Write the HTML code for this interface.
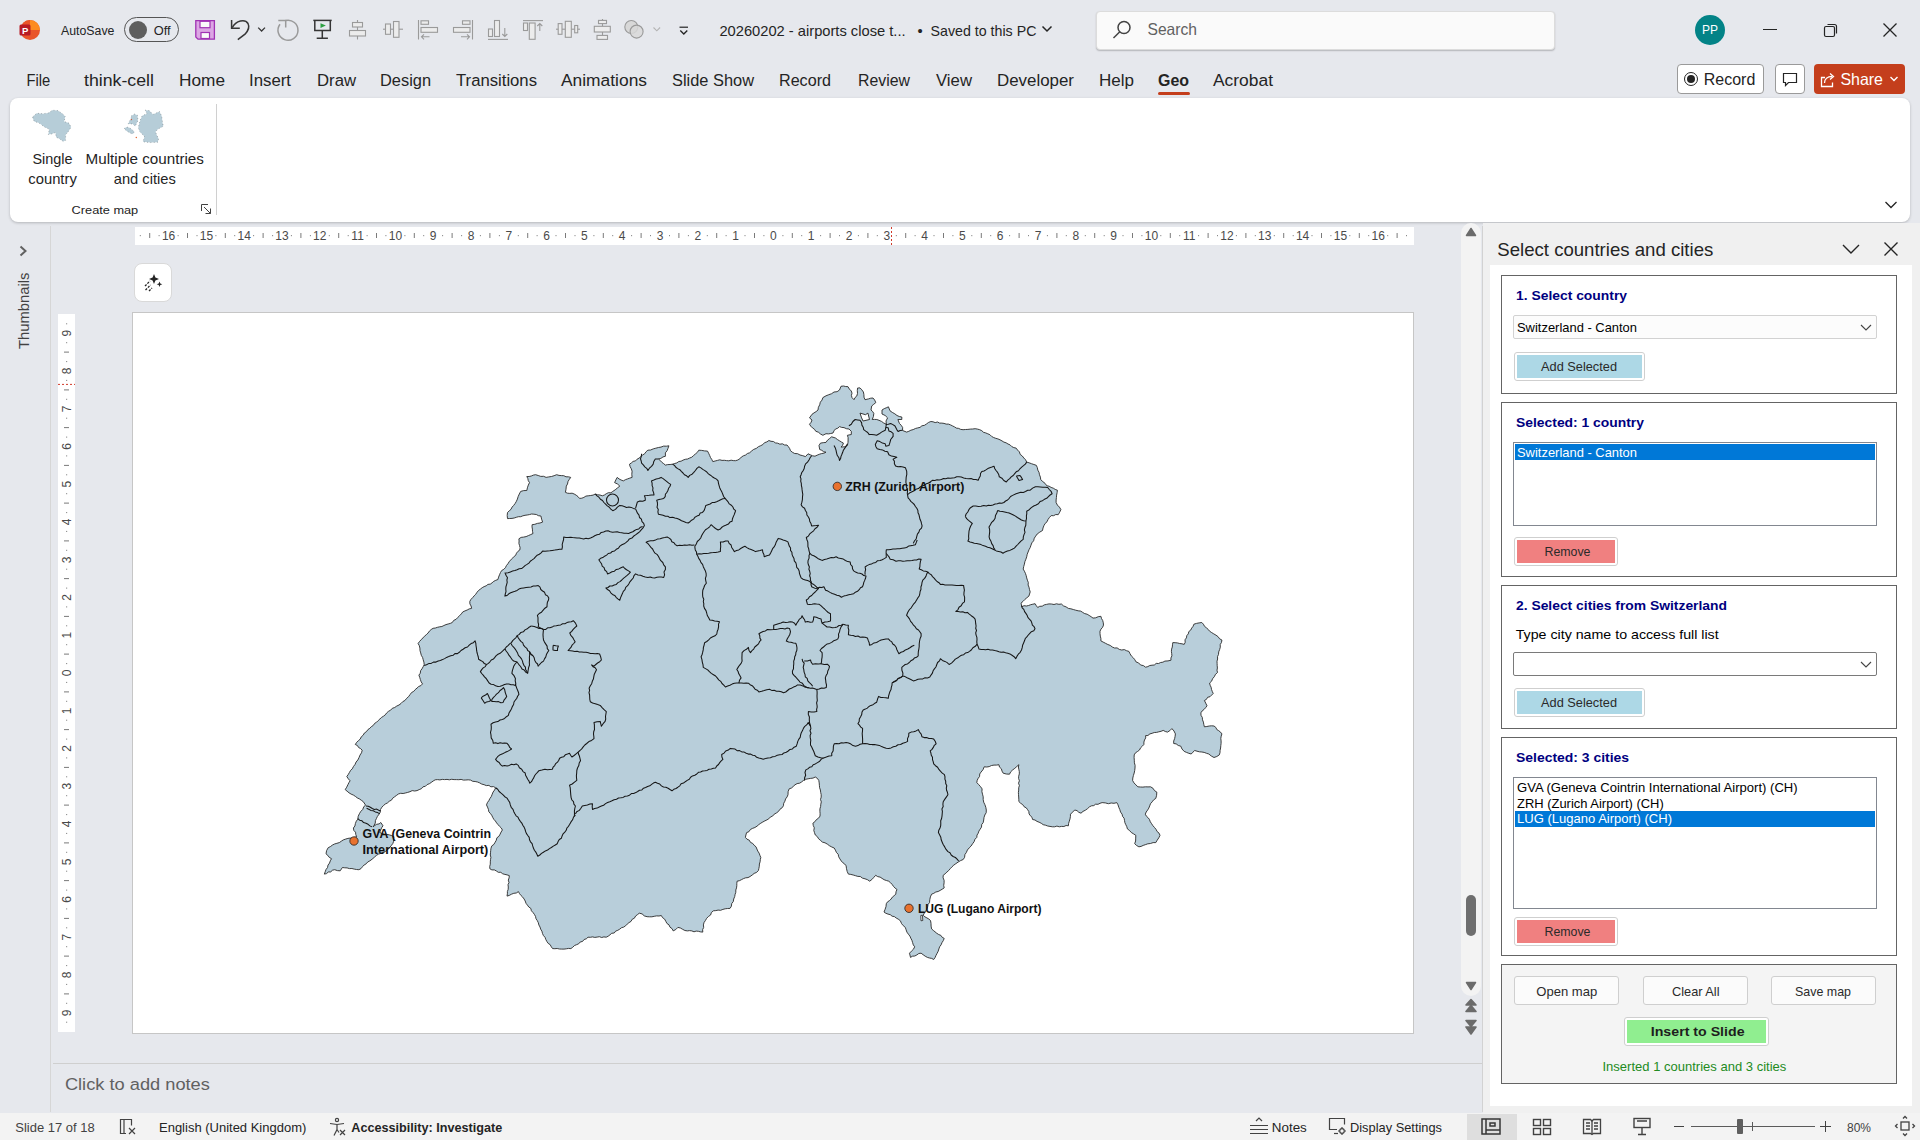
<!DOCTYPE html>
<html><head><meta charset="utf-8">
<style>
*{margin:0;padding:0;box-sizing:border-box}
html,body{width:1920px;height:1140px;overflow:hidden;background:#e6e8ed;font-family:"Liberation Sans",sans-serif;color:#242424}
.a{position:absolute}
.t{position:absolute;white-space:nowrap;line-height:1}
.tab{position:absolute;top:72px;font-size:16px;color:#242424;white-space:nowrap;line-height:1}
.ico{position:absolute}
</style></head><body>
<!-- TITLE BAR -->
<div id="titlebar">
  <!-- ppt logo -->
  <svg class="ico" style="left:19px;top:19px" width="22" height="22" viewBox="0 0 22 22">
    <circle cx="11" cy="11" r="10" fill="#e9542a"/>
    <path d="M11 1 A10 10 0 0 1 21 11 L11 11 Z" fill="#fd8c1f"/>
    <path d="M11 1 A10 10 0 0 0 4 4 L11 11Z" fill="#e9542a"/>
    <rect x="0.5" y="5.5" width="11" height="11" rx="1.5" fill="#b81b24"/>
    <text x="3" y="14.6" font-size="9.5" font-weight="bold" fill="#fff" font-family="Liberation Sans">P</text>
  </svg>
  <div class="a" style="left:124px;top:17px;width:55px;height:25px;border:1px solid #555;border-radius:13px"></div>
  <div class="a" style="left:129px;top:21px;width:18px;height:18px;border-radius:50%;background:#5e5e5e"></div>
  <!-- save -->
  <svg class="a" style="left:185px;top:10px" width="160" height="40" viewBox="185 10 160 40">
    <path d="M195.8 20.6h18.6v18.6h-16.4l-2.2-2.2z" fill="#dca6e4" stroke="#a032b4" stroke-width="1.3"/>
    <rect x="200" y="21.3" width="10" height="6.4" fill="#fafafa" stroke="#a032b4" stroke-width="1.2"/>
    <rect x="201" y="32.5" width="8.5" height="6" fill="#fafafa" stroke="#a032b4" stroke-width="1.2"/>
    <g fill="none" stroke="#363636" stroke-width="1.5" stroke-linecap="butt">
      <path d="M231.6 20v8.2h8.2"/><path d="M232.2 27.6C236 20.5 245 18.5 248 23.5 250 27.5 248 31 245 34.2L237.8 39.6"/>
      <path d="M258.2 27.6l3.4 3.4 3.4-3.4" stroke-width="1.3"/>
    </g>
    <g fill="none" stroke="#9a9a9a" stroke-width="1.5">
      <path d="M285.6 20.5A10 10 0 1 1 280 24.2"/><path d="M278.3 20.4h7.4v7"/>
    </g>
    <g fill="none" stroke="#363636" stroke-width="1.5">
      <path d="M313.3 20.4h18.4"/><path d="M314.8 20.4v10h15.5v-10"/><path d="M322.3 30.4v7.8M316.7 38.2h11.2"/>
    </g>
    <path d="M320.5 23.2l5.4 2.4-5.4 2.4z" fill="#2ea043"/>
  </svg>
  <svg class="a" style="left:340px;top:14px" width="360" height="32" viewBox="340 14 360 32" fill="#ececec" stroke="#9a9a9a" stroke-width="1.1">
<path d="M357.5 20v19.5" fill="none"/><rect x="352.5" y="22.5" width="10" height="4.5"/><rect x="349.5" y="30.5" width="16" height="5.5"/>
<path d="M383 29.2h20" fill="none"/><rect x="385.5" y="24" width="5" height="10.3"/><rect x="393.5" y="21.5" width="5.5" height="15.8"/>
<path d="M418.5 20v19.5" fill="none"/><rect x="421" y="20.8" width="7.5" height="3.5"/><rect x="421" y="27.5" width="16.5" height="4.8"/><path d="M429.5 36.8h-8M424 34.3l-2.5 2.5 2.5 2.5" fill="none"/>
<path d="M472.5 20v19.5" fill="none"/><rect x="462.5" y="20.8" width="7.5" height="3.5"/><rect x="453.5" y="27.5" width="16.5" height="4.8"/><path d="M461 36.8h8M467 34.3l2.5 2.5-2.5 2.5" fill="none"/>
<path d="M488 39.4h20" fill="none"/><rect x="488.5" y="29" width="4" height="7.5"/><rect x="494.5" y="20.5" width="5" height="16"/><path d="M504.8 28v8.5M502.3 34l2.5 2.5 2.5-2.5" fill="none"/>
<path d="M523 20.6h20" fill="none"/><rect x="523.5" y="23" width="4" height="7.5"/><rect x="529.3" y="23" width="5.8" height="16.3"/><path d="M539.8 31v-7.5M537.3 26l2.5-2.5 2.5 2.5" fill="none"/>
<path d="M556 29.2h24" fill="none"/><rect x="558.2" y="23.6" width="3.8" height="10.7"/><rect x="565.3" y="21.3" width="6" height="16"/><rect x="574.7" y="25.5" width="3" height="7.3"/>
<path d="M602.5 19v21" fill="none"/><rect x="598.5" y="20.4" width="8" height="3.2"/><rect x="594.3" y="26.3" width="16" height="5.7"/><rect x="597" y="35.4" width="10.5" height="4"/>
<circle cx="631.3" cy="27" r="6.5" fill="#d8d8d8"/><circle cx="636.6" cy="31.6" r="6.5" fill="#d8d8d8" fill-opacity="0.85"/>
<path d="M653.5 27.5l3.3 3.3 3.3-3.3" fill="none" stroke="#b4b4b4"/>
<path d="M679.5 27.2h8.5" stroke="#242424" stroke-width="1.2" fill="none"/><path d="M680.3 30.5l3.5 3.5 3.5-3.5" stroke="#242424" stroke-width="1.3" fill="none"/>
</svg>
  <svg class="ico" style="left:1041px;top:25px" width="12" height="8" viewBox="0 0 12 8" fill="none" stroke="#242424" stroke-width="1.5"><path d="M1.5 1.5l4.5 4.5 4.5-4.5"/></svg>
  <!-- search -->
  <div class="a" style="left:1096px;top:11px;width:459px;height:39px;background:#fafafa;border:1px solid #dcdcdc;border-radius:4px;box-shadow:0 1px 1.5px rgba(0,0,0,.22)"></div>
  <svg class="ico" style="left:1111px;top:19px" width="22" height="22" viewBox="0 0 22 22" fill="none" stroke="#424242" stroke-width="1.5"><circle cx="13" cy="8.5" r="6"/><path d="M8.8 12.7L2.5 19"/></svg>
  <!-- avatar -->
  <div class="a" style="left:1695px;top:15px;width:30px;height:30px;border-radius:50%;background:#038387;color:#fff;font-size:12px;line-height:30px;text-align:center">PP</div>
  <div class="a" style="left:1763px;top:29px;width:14px;height:1px;background:#242424"></div>
  <svg class="ico" style="left:1823px;top:22px" width="16" height="16" viewBox="0 0 16 16" fill="none" stroke="#242424" stroke-width="1.2"><rect x="1.5" y="4.5" width="10" height="10" rx="1.5"/><path d="M4.5 2.5h7a2 2 0 0 1 2 2v7"/></svg>
  <svg class="ico" style="left:1882px;top:22px" width="16" height="16" viewBox="0 0 16 16" fill="none" stroke="#242424" stroke-width="1.3"><path d="M1.5 1.5l13 13M14.5 1.5l-13 13"/></svg>
</div>

<!-- TABS -->
<div class="a" style="left:1158px;top:92px;width:32px;height:3px;border-radius:2px;background:#c43e1c"></div>

<!-- record/comment/share -->
<div class="a" style="left:1677px;top:64px;width:87px;height:30px;border:1px solid #9a9a9a;border-radius:4px;background:#fff"></div>
<div class="a" style="left:1684px;top:72px;width:14px;height:14px;border:1.5px solid #242424;border-radius:50%"></div>
<div class="a" style="left:1687px;top:75px;width:8px;height:8px;background:#242424;border-radius:50%"></div>
<div class="a" style="left:1775px;top:64px;width:30px;height:30px;border:1px solid #9a9a9a;border-radius:4px;background:#fff"></div>
<svg class="ico" style="left:1781px;top:70px" width="18" height="18" viewBox="0 0 18 18" fill="none" stroke="#242424" stroke-width="1.2"><path d="M2.5 3.5h13v9h-8l-3 3v-3h-2z"/></svg>
<div class="a" style="left:1814px;top:64px;width:91px;height:30px;border-radius:4px;background:#c43e1c"></div>
<svg class="ico" style="left:1820px;top:70px" width="16" height="18" viewBox="0 0 16 18" fill="none" stroke="#fff" stroke-width="1.3"><path d="M5 7.5H1.5v9h11v-4"/><path d="M4.5 13c0-4 3-6.5 7.5-6.5"/><path d="M10 3.5l3.5 3-3.5 3"/></svg>
<svg class="ico" style="left:1889px;top:75px" width="10" height="8" viewBox="0 0 10 8" fill="none" stroke="#fff" stroke-width="1.4"><path d="M1.5 2l3.5 3.5 3.5-3.5"/></svg>

<!-- RIBBON PANEL -->
<div class="a" style="left:10px;top:98px;width:1900px;height:124px;background:#fff;border-radius:8px;box-shadow:0 1px 3px rgba(0,0,0,.22)"></div>

<!-- main -->

<!-- RIBBON CONTENT -->
<svg class="ico" style="left:0;top:0" width="200" height="160" viewBox="0 0 200 160"><g fill="#b6cdd8" stroke="#5a6266" stroke-width="0.6" stroke-dasharray="0.7 2.6">
<polygon points="32.8,116.8 36.7,113.3 43.0,113.7 48.4,112.9 52.3,110.2 57.8,110.6 62.5,113.7 65.2,116.5 64.1,121.5 68.8,123.1 71.1,127.0 68.8,130.9 65.6,134.8 65.6,140.3 63.3,141.5 59.4,138.7 56.2,137.2 55.5,132.5 51.6,134.0 48.4,134.4 49.2,129.3 44.5,127.0 39.1,123.1 34.4,121.5 32.8,118.4"/><polygon points="145.3,110.2 149.2,110.6 153.1,114.5 159.4,111.4 161.7,116.1 162.5,122.3 163.3,126.2 157.8,129.3 155.5,131.7 157.0,135.6 158.6,138.7 157.8,142.2 150.0,142.6 143.0,141.8 144.5,136.4 139.8,131.7 138.3,127.8 139.1,123.9 140.6,119.2 142.2,115.7 146.9,113.7"/><polygon points="131.2,116.1 134.4,114.1 137.5,115.3 137.9,120.8 135.2,126.2 132.8,123.9 128.1,123.9 129.7,120.8 131.2,118.4"/><polygon points="124.2,128.6 126.6,127.0 129.7,127.8 134.4,131.7 132.8,134.0 130.5,133.2 126.6,130.9"/></g>
<circle cx="131.4" cy="119.6" r="0.7" fill="#d0502a"/><circle cx="136.3" cy="137.5" r="0.7" fill="#e0602a"/></svg>
<svg class="ico" style="left:201px;top:204px" width="11" height="11" viewBox="0 0 11 11" fill="none" stroke="#424242" stroke-width="1"><path d="M0.5 7V0.5H7"/><path d="M3 3l6.5 6.5M4.5 9.5h5v-5"/></svg>
<div class="a" style="left:216px;top:104px;width:1px;height:111px;background:#d0d0d0"></div>
<svg class="ico" style="left:1884px;top:200px" width="14" height="10" viewBox="0 0 14 10" fill="none" stroke="#242424" stroke-width="1.3"><path d="M1.5 2l5.5 5.5 5.5-5.5"/></svg>

<!-- LEFT SIDEBAR -->
<div class="a" style="left:50px;top:226px;width:1px;height:886px;background:#d6d6d6"></div>
<svg class="ico" style="left:18px;top:245px" width="10" height="12" viewBox="0 0 10 12"><path d="M2.5 1.5l5 4.5-5 4.5" fill="none" stroke="#616161" stroke-width="2"/></svg>

<svg class="a" style="left:135px;top:227px" width="1279" height="18" viewBox="135 227 1279 18">
<rect x="135" y="227" width="1279" height="18" fill="#fff"/>
<rect x="139.8" y="235" width="1" height="1.2" fill="#8a8a8a"/>
<rect x="149.2" y="233" width="1" height="5" fill="#7a7a7a"/>
<rect x="158.6" y="235" width="1" height="1.2" fill="#8a8a8a"/>
<text x="168.6" y="240" font-size="12" fill="#4a4a4a" text-anchor="middle" font-family="Liberation Sans">16</text>
<rect x="177.6" y="235" width="1" height="1.2" fill="#8a8a8a"/>
<rect x="187.0" y="233" width="1" height="5" fill="#7a7a7a"/>
<rect x="196.5" y="235" width="1" height="1.2" fill="#8a8a8a"/>
<text x="206.4" y="240" font-size="12" fill="#4a4a4a" text-anchor="middle" font-family="Liberation Sans">15</text>
<rect x="215.4" y="235" width="1" height="1.2" fill="#8a8a8a"/>
<rect x="224.8" y="233" width="1" height="5" fill="#7a7a7a"/>
<rect x="234.2" y="235" width="1" height="1.2" fill="#8a8a8a"/>
<text x="244.2" y="240" font-size="12" fill="#4a4a4a" text-anchor="middle" font-family="Liberation Sans">14</text>
<rect x="253.1" y="235" width="1" height="1.2" fill="#8a8a8a"/>
<rect x="262.6" y="233" width="1" height="5" fill="#7a7a7a"/>
<rect x="272.1" y="235" width="1" height="1.2" fill="#8a8a8a"/>
<text x="282.0" y="240" font-size="12" fill="#4a4a4a" text-anchor="middle" font-family="Liberation Sans">13</text>
<rect x="290.9" y="235" width="1" height="1.2" fill="#8a8a8a"/>
<rect x="300.4" y="233" width="1" height="5" fill="#7a7a7a"/>
<rect x="309.9" y="235" width="1" height="1.2" fill="#8a8a8a"/>
<text x="319.8" y="240" font-size="12" fill="#4a4a4a" text-anchor="middle" font-family="Liberation Sans">12</text>
<rect x="328.8" y="235" width="1" height="1.2" fill="#8a8a8a"/>
<rect x="338.2" y="233" width="1" height="5" fill="#7a7a7a"/>
<rect x="347.7" y="235" width="1" height="1.2" fill="#8a8a8a"/>
<text x="357.6" y="240" font-size="12" fill="#4a4a4a" text-anchor="middle" font-family="Liberation Sans">11</text>
<rect x="366.6" y="235" width="1" height="1.2" fill="#8a8a8a"/>
<rect x="376.0" y="233" width="1" height="5" fill="#7a7a7a"/>
<rect x="385.4" y="235" width="1" height="1.2" fill="#8a8a8a"/>
<text x="395.4" y="240" font-size="12" fill="#4a4a4a" text-anchor="middle" font-family="Liberation Sans">10</text>
<rect x="404.4" y="235" width="1" height="1.2" fill="#8a8a8a"/>
<rect x="413.8" y="233" width="1" height="5" fill="#7a7a7a"/>
<rect x="423.2" y="235" width="1" height="1.2" fill="#8a8a8a"/>
<text x="433.2" y="240" font-size="12" fill="#4a4a4a" text-anchor="middle" font-family="Liberation Sans">9</text>
<rect x="442.1" y="235" width="1" height="1.2" fill="#8a8a8a"/>
<rect x="451.6" y="233" width="1" height="5" fill="#7a7a7a"/>
<rect x="461.1" y="235" width="1" height="1.2" fill="#8a8a8a"/>
<text x="471.0" y="240" font-size="12" fill="#4a4a4a" text-anchor="middle" font-family="Liberation Sans">8</text>
<rect x="479.9" y="235" width="1" height="1.2" fill="#8a8a8a"/>
<rect x="489.4" y="233" width="1" height="5" fill="#7a7a7a"/>
<rect x="498.9" y="235" width="1" height="1.2" fill="#8a8a8a"/>
<text x="508.8" y="240" font-size="12" fill="#4a4a4a" text-anchor="middle" font-family="Liberation Sans">7</text>
<rect x="517.8" y="235" width="1" height="1.2" fill="#8a8a8a"/>
<rect x="527.2" y="233" width="1" height="5" fill="#7a7a7a"/>
<rect x="536.6" y="235" width="1" height="1.2" fill="#8a8a8a"/>
<text x="546.6" y="240" font-size="12" fill="#4a4a4a" text-anchor="middle" font-family="Liberation Sans">6</text>
<rect x="555.5" y="235" width="1" height="1.2" fill="#8a8a8a"/>
<rect x="565.0" y="233" width="1" height="5" fill="#7a7a7a"/>
<rect x="574.5" y="235" width="1" height="1.2" fill="#8a8a8a"/>
<text x="584.4" y="240" font-size="12" fill="#4a4a4a" text-anchor="middle" font-family="Liberation Sans">5</text>
<rect x="593.4" y="235" width="1" height="1.2" fill="#8a8a8a"/>
<rect x="602.8" y="233" width="1" height="5" fill="#7a7a7a"/>
<rect x="612.2" y="235" width="1" height="1.2" fill="#8a8a8a"/>
<text x="622.2" y="240" font-size="12" fill="#4a4a4a" text-anchor="middle" font-family="Liberation Sans">4</text>
<rect x="631.1" y="235" width="1" height="1.2" fill="#8a8a8a"/>
<rect x="640.6" y="233" width="1" height="5" fill="#7a7a7a"/>
<rect x="650.0" y="235" width="1" height="1.2" fill="#8a8a8a"/>
<text x="660.0" y="240" font-size="12" fill="#4a4a4a" text-anchor="middle" font-family="Liberation Sans">3</text>
<rect x="669.0" y="235" width="1" height="1.2" fill="#8a8a8a"/>
<rect x="678.4" y="233" width="1" height="5" fill="#7a7a7a"/>
<rect x="687.9" y="235" width="1" height="1.2" fill="#8a8a8a"/>
<text x="697.8" y="240" font-size="12" fill="#4a4a4a" text-anchor="middle" font-family="Liberation Sans">2</text>
<rect x="706.8" y="235" width="1" height="1.2" fill="#8a8a8a"/>
<rect x="716.2" y="233" width="1" height="5" fill="#7a7a7a"/>
<rect x="725.6" y="235" width="1" height="1.2" fill="#8a8a8a"/>
<text x="735.6" y="240" font-size="12" fill="#4a4a4a" text-anchor="middle" font-family="Liberation Sans">1</text>
<rect x="744.5" y="235" width="1" height="1.2" fill="#8a8a8a"/>
<rect x="754.0" y="233" width="1" height="5" fill="#7a7a7a"/>
<rect x="763.4" y="235" width="1" height="1.2" fill="#8a8a8a"/>
<text x="773.4" y="240" font-size="12" fill="#4a4a4a" text-anchor="middle" font-family="Liberation Sans">0</text>
<rect x="782.4" y="235" width="1" height="1.2" fill="#8a8a8a"/>
<rect x="791.8" y="233" width="1" height="5" fill="#7a7a7a"/>
<rect x="801.2" y="235" width="1" height="1.2" fill="#8a8a8a"/>
<text x="811.2" y="240" font-size="12" fill="#4a4a4a" text-anchor="middle" font-family="Liberation Sans">1</text>
<rect x="820.1" y="235" width="1" height="1.2" fill="#8a8a8a"/>
<rect x="829.6" y="233" width="1" height="5" fill="#7a7a7a"/>
<rect x="839.0" y="235" width="1" height="1.2" fill="#8a8a8a"/>
<text x="849.0" y="240" font-size="12" fill="#4a4a4a" text-anchor="middle" font-family="Liberation Sans">2</text>
<rect x="857.9" y="235" width="1" height="1.2" fill="#8a8a8a"/>
<rect x="867.4" y="233" width="1" height="5" fill="#7a7a7a"/>
<rect x="876.8" y="235" width="1" height="1.2" fill="#8a8a8a"/>
<text x="886.8" y="240" font-size="12" fill="#4a4a4a" text-anchor="middle" font-family="Liberation Sans">3</text>
<rect x="895.8" y="235" width="1" height="1.2" fill="#8a8a8a"/>
<rect x="905.2" y="233" width="1" height="5" fill="#7a7a7a"/>
<rect x="914.6" y="235" width="1" height="1.2" fill="#8a8a8a"/>
<text x="924.6" y="240" font-size="12" fill="#4a4a4a" text-anchor="middle" font-family="Liberation Sans">4</text>
<rect x="933.5" y="235" width="1" height="1.2" fill="#8a8a8a"/>
<rect x="943.0" y="233" width="1" height="5" fill="#7a7a7a"/>
<rect x="952.4" y="235" width="1" height="1.2" fill="#8a8a8a"/>
<text x="962.4" y="240" font-size="12" fill="#4a4a4a" text-anchor="middle" font-family="Liberation Sans">5</text>
<rect x="971.3" y="235" width="1" height="1.2" fill="#8a8a8a"/>
<rect x="980.8" y="233" width="1" height="5" fill="#7a7a7a"/>
<rect x="990.2" y="235" width="1" height="1.2" fill="#8a8a8a"/>
<text x="1000.2" y="240" font-size="12" fill="#4a4a4a" text-anchor="middle" font-family="Liberation Sans">6</text>
<rect x="1009.1" y="235" width="1" height="1.2" fill="#8a8a8a"/>
<rect x="1018.6" y="233" width="1" height="5" fill="#7a7a7a"/>
<rect x="1028.0" y="235" width="1" height="1.2" fill="#8a8a8a"/>
<text x="1038.0" y="240" font-size="12" fill="#4a4a4a" text-anchor="middle" font-family="Liberation Sans">7</text>
<rect x="1046.9" y="235" width="1" height="1.2" fill="#8a8a8a"/>
<rect x="1056.4" y="233" width="1" height="5" fill="#7a7a7a"/>
<rect x="1065.8" y="235" width="1" height="1.2" fill="#8a8a8a"/>
<text x="1075.8" y="240" font-size="12" fill="#4a4a4a" text-anchor="middle" font-family="Liberation Sans">8</text>
<rect x="1084.8" y="235" width="1" height="1.2" fill="#8a8a8a"/>
<rect x="1094.2" y="233" width="1" height="5" fill="#7a7a7a"/>
<rect x="1103.7" y="235" width="1" height="1.2" fill="#8a8a8a"/>
<text x="1113.6" y="240" font-size="12" fill="#4a4a4a" text-anchor="middle" font-family="Liberation Sans">9</text>
<rect x="1122.5" y="235" width="1" height="1.2" fill="#8a8a8a"/>
<rect x="1132.0" y="233" width="1" height="5" fill="#7a7a7a"/>
<rect x="1141.4" y="235" width="1" height="1.2" fill="#8a8a8a"/>
<text x="1151.4" y="240" font-size="12" fill="#4a4a4a" text-anchor="middle" font-family="Liberation Sans">10</text>
<rect x="1160.3" y="235" width="1" height="1.2" fill="#8a8a8a"/>
<rect x="1169.8" y="233" width="1" height="5" fill="#7a7a7a"/>
<rect x="1179.2" y="235" width="1" height="1.2" fill="#8a8a8a"/>
<text x="1189.2" y="240" font-size="12" fill="#4a4a4a" text-anchor="middle" font-family="Liberation Sans">11</text>
<rect x="1198.1" y="235" width="1" height="1.2" fill="#8a8a8a"/>
<rect x="1207.6" y="233" width="1" height="5" fill="#7a7a7a"/>
<rect x="1217.0" y="235" width="1" height="1.2" fill="#8a8a8a"/>
<text x="1227.0" y="240" font-size="12" fill="#4a4a4a" text-anchor="middle" font-family="Liberation Sans">12</text>
<rect x="1235.9" y="235" width="1" height="1.2" fill="#8a8a8a"/>
<rect x="1245.4" y="233" width="1" height="5" fill="#7a7a7a"/>
<rect x="1254.8" y="235" width="1" height="1.2" fill="#8a8a8a"/>
<text x="1264.8" y="240" font-size="12" fill="#4a4a4a" text-anchor="middle" font-family="Liberation Sans">13</text>
<rect x="1273.8" y="235" width="1" height="1.2" fill="#8a8a8a"/>
<rect x="1283.2" y="233" width="1" height="5" fill="#7a7a7a"/>
<rect x="1292.7" y="235" width="1" height="1.2" fill="#8a8a8a"/>
<text x="1302.6" y="240" font-size="12" fill="#4a4a4a" text-anchor="middle" font-family="Liberation Sans">14</text>
<rect x="1311.5" y="235" width="1" height="1.2" fill="#8a8a8a"/>
<rect x="1321.0" y="233" width="1" height="5" fill="#7a7a7a"/>
<rect x="1330.4" y="235" width="1" height="1.2" fill="#8a8a8a"/>
<text x="1340.4" y="240" font-size="12" fill="#4a4a4a" text-anchor="middle" font-family="Liberation Sans">15</text>
<rect x="1349.3" y="235" width="1" height="1.2" fill="#8a8a8a"/>
<rect x="1358.8" y="233" width="1" height="5" fill="#7a7a7a"/>
<rect x="1368.2" y="235" width="1" height="1.2" fill="#8a8a8a"/>
<text x="1378.2" y="240" font-size="12" fill="#4a4a4a" text-anchor="middle" font-family="Liberation Sans">16</text>
<rect x="1387.2" y="235" width="1" height="1.2" fill="#8a8a8a"/>
<rect x="1396.6" y="233" width="1" height="5" fill="#7a7a7a"/>
<rect x="1406.0" y="235" width="1" height="1.2" fill="#8a8a8a"/>
<line x1="891.5" y1="227" x2="891.5" y2="245" stroke="#d03a2a" stroke-width="1" stroke-dasharray="2 2"/>
</svg>
<svg class="a" style="left:58px;top:314px" width="17" height="718" viewBox="58 314 17 718">
<rect x="58" y="314" width="17" height="718" fill="#fff"/>
<rect x="66" y="323.3" width="1.2" height="1" fill="#8a8a8a"/>
<text x="0" y="0" transform="translate(70.6 333.2) rotate(-90)" font-size="12" fill="#4a4a4a" text-anchor="middle" font-family="Liberation Sans">9</text>
<rect x="66" y="342.2" width="1.2" height="1" fill="#8a8a8a"/>
<rect x="64" y="351.6" width="5" height="1" fill="#7a7a7a"/>
<rect x="66" y="361.1" width="1.2" height="1" fill="#8a8a8a"/>
<text x="0" y="0" transform="translate(70.6 371.0) rotate(-90)" font-size="12" fill="#4a4a4a" text-anchor="middle" font-family="Liberation Sans">8</text>
<rect x="66" y="379.9" width="1.2" height="1" fill="#8a8a8a"/>
<rect x="64" y="389.4" width="5" height="1" fill="#7a7a7a"/>
<rect x="66" y="398.8" width="1.2" height="1" fill="#8a8a8a"/>
<text x="0" y="0" transform="translate(70.6 408.8) rotate(-90)" font-size="12" fill="#4a4a4a" text-anchor="middle" font-family="Liberation Sans">7</text>
<rect x="66" y="417.7" width="1.2" height="1" fill="#8a8a8a"/>
<rect x="64" y="427.1" width="5" height="1" fill="#7a7a7a"/>
<rect x="66" y="436.6" width="1.2" height="1" fill="#8a8a8a"/>
<text x="0" y="0" transform="translate(70.6 446.5) rotate(-90)" font-size="12" fill="#4a4a4a" text-anchor="middle" font-family="Liberation Sans">6</text>
<rect x="66" y="455.4" width="1.2" height="1" fill="#8a8a8a"/>
<rect x="64" y="464.9" width="5" height="1" fill="#7a7a7a"/>
<rect x="66" y="474.3" width="1.2" height="1" fill="#8a8a8a"/>
<text x="0" y="0" transform="translate(70.6 484.2) rotate(-90)" font-size="12" fill="#4a4a4a" text-anchor="middle" font-family="Liberation Sans">5</text>
<rect x="66" y="493.2" width="1.2" height="1" fill="#8a8a8a"/>
<rect x="64" y="502.6" width="5" height="1" fill="#7a7a7a"/>
<rect x="66" y="512.1" width="1.2" height="1" fill="#8a8a8a"/>
<text x="0" y="0" transform="translate(70.6 522.0) rotate(-90)" font-size="12" fill="#4a4a4a" text-anchor="middle" font-family="Liberation Sans">4</text>
<rect x="66" y="530.9" width="1.2" height="1" fill="#8a8a8a"/>
<rect x="64" y="540.4" width="5" height="1" fill="#7a7a7a"/>
<rect x="66" y="549.8" width="1.2" height="1" fill="#8a8a8a"/>
<text x="0" y="0" transform="translate(70.6 559.8) rotate(-90)" font-size="12" fill="#4a4a4a" text-anchor="middle" font-family="Liberation Sans">3</text>
<rect x="66" y="568.7" width="1.2" height="1" fill="#8a8a8a"/>
<rect x="64" y="578.1" width="5" height="1" fill="#7a7a7a"/>
<rect x="66" y="587.6" width="1.2" height="1" fill="#8a8a8a"/>
<text x="0" y="0" transform="translate(70.6 597.5) rotate(-90)" font-size="12" fill="#4a4a4a" text-anchor="middle" font-family="Liberation Sans">2</text>
<rect x="66" y="606.4" width="1.2" height="1" fill="#8a8a8a"/>
<rect x="64" y="615.9" width="5" height="1" fill="#7a7a7a"/>
<rect x="66" y="625.3" width="1.2" height="1" fill="#8a8a8a"/>
<text x="0" y="0" transform="translate(70.6 635.2) rotate(-90)" font-size="12" fill="#4a4a4a" text-anchor="middle" font-family="Liberation Sans">1</text>
<rect x="66" y="644.2" width="1.2" height="1" fill="#8a8a8a"/>
<rect x="64" y="653.6" width="5" height="1" fill="#7a7a7a"/>
<rect x="66" y="663.1" width="1.2" height="1" fill="#8a8a8a"/>
<text x="0" y="0" transform="translate(70.6 673.0) rotate(-90)" font-size="12" fill="#4a4a4a" text-anchor="middle" font-family="Liberation Sans">0</text>
<rect x="66" y="681.9" width="1.2" height="1" fill="#8a8a8a"/>
<rect x="64" y="691.4" width="5" height="1" fill="#7a7a7a"/>
<rect x="66" y="700.8" width="1.2" height="1" fill="#8a8a8a"/>
<text x="0" y="0" transform="translate(70.6 710.8) rotate(-90)" font-size="12" fill="#4a4a4a" text-anchor="middle" font-family="Liberation Sans">1</text>
<rect x="66" y="719.7" width="1.2" height="1" fill="#8a8a8a"/>
<rect x="64" y="729.1" width="5" height="1" fill="#7a7a7a"/>
<rect x="66" y="738.6" width="1.2" height="1" fill="#8a8a8a"/>
<text x="0" y="0" transform="translate(70.6 748.5) rotate(-90)" font-size="12" fill="#4a4a4a" text-anchor="middle" font-family="Liberation Sans">2</text>
<rect x="66" y="757.4" width="1.2" height="1" fill="#8a8a8a"/>
<rect x="64" y="766.9" width="5" height="1" fill="#7a7a7a"/>
<rect x="66" y="776.3" width="1.2" height="1" fill="#8a8a8a"/>
<text x="0" y="0" transform="translate(70.6 786.2) rotate(-90)" font-size="12" fill="#4a4a4a" text-anchor="middle" font-family="Liberation Sans">3</text>
<rect x="66" y="795.2" width="1.2" height="1" fill="#8a8a8a"/>
<rect x="64" y="804.6" width="5" height="1" fill="#7a7a7a"/>
<rect x="66" y="814.1" width="1.2" height="1" fill="#8a8a8a"/>
<text x="0" y="0" transform="translate(70.6 824.0) rotate(-90)" font-size="12" fill="#4a4a4a" text-anchor="middle" font-family="Liberation Sans">4</text>
<rect x="66" y="832.9" width="1.2" height="1" fill="#8a8a8a"/>
<rect x="64" y="842.4" width="5" height="1" fill="#7a7a7a"/>
<rect x="66" y="851.8" width="1.2" height="1" fill="#8a8a8a"/>
<text x="0" y="0" transform="translate(70.6 861.8) rotate(-90)" font-size="12" fill="#4a4a4a" text-anchor="middle" font-family="Liberation Sans">5</text>
<rect x="66" y="870.7" width="1.2" height="1" fill="#8a8a8a"/>
<rect x="64" y="880.1" width="5" height="1" fill="#7a7a7a"/>
<rect x="66" y="889.6" width="1.2" height="1" fill="#8a8a8a"/>
<text x="0" y="0" transform="translate(70.6 899.5) rotate(-90)" font-size="12" fill="#4a4a4a" text-anchor="middle" font-family="Liberation Sans">6</text>
<rect x="66" y="908.4" width="1.2" height="1" fill="#8a8a8a"/>
<rect x="64" y="917.9" width="5" height="1" fill="#7a7a7a"/>
<rect x="66" y="927.3" width="1.2" height="1" fill="#8a8a8a"/>
<text x="0" y="0" transform="translate(70.6 937.2) rotate(-90)" font-size="12" fill="#4a4a4a" text-anchor="middle" font-family="Liberation Sans">7</text>
<rect x="66" y="946.2" width="1.2" height="1" fill="#8a8a8a"/>
<rect x="64" y="955.6" width="5" height="1" fill="#7a7a7a"/>
<rect x="66" y="965.1" width="1.2" height="1" fill="#8a8a8a"/>
<text x="0" y="0" transform="translate(70.6 975.0) rotate(-90)" font-size="12" fill="#4a4a4a" text-anchor="middle" font-family="Liberation Sans">8</text>
<rect x="66" y="983.9" width="1.2" height="1" fill="#8a8a8a"/>
<rect x="64" y="993.4" width="5" height="1" fill="#7a7a7a"/>
<rect x="66" y="1002.8" width="1.2" height="1" fill="#8a8a8a"/>
<text x="0" y="0" transform="translate(70.6 1012.8) rotate(-90)" font-size="12" fill="#4a4a4a" text-anchor="middle" font-family="Liberation Sans">9</text>
<rect x="66" y="1021.7" width="1.2" height="1" fill="#8a8a8a"/>
<line x1="58" y1="384.4" x2="75" y2="384.4" stroke="#d03a2a" stroke-width="1" stroke-dasharray="2 2"/>
</svg>

<!-- magic button -->
<div class="a" style="left:134px;top:263px;width:38px;height:39px;background:#fff;border:1px solid #d9d9d9;border-radius:8px"></div>
<svg class="ico" style="left:141px;top:271px" width="24" height="24" viewBox="0 0 24 24"><path d="M13 3l1.4 3.6L18 8l-3.6 1.4L13 13l-1.4-3.6L8 8l3.6-1.4z" fill="#242424"/><path d="M18.5 10.5l.8 2 2 .8-2 .8-.8 2-.8-2-2-.8 2-.8z" fill="#242424"/><path d="M4 15l5-5M4.5 19l5-5M8 20l3-3" stroke="#242424" stroke-width="1.3" stroke-dasharray="2.2 1.2"/></svg>

<!-- SLIDE -->
<div class="a" style="left:132px;top:312px;width:1282px;height:722px;background:#fff;border:1px solid #c6c6c6"></div>
<!--MAP--><svg class="a" style="left:133px;top:313px" width="1280" height="720" viewBox="133 313 1280 720">
<polygon points="324.3,874.1 325.2,871.8 326.0,869.5 327.5,867.6 328.0,865.1 329.5,863.1 330.3,860.8 331.5,858.7 329.3,857.4 327.8,855.4 326.0,853.8 326.6,850.6 328.2,847.7 330.4,846.6 332.4,845.1 334.5,844.0 336.9,843.3 339.3,842.6 341.3,841.2 343.3,839.9 345.6,839.1 347.9,838.4 350.1,838.1 352.4,838.1 354.5,837.3 356.7,836.8 355.8,834.6 355.5,832.2 353.8,830.4 353.4,828.0 354.9,826.0 355.4,823.5 356.3,821.2 357.8,819.2 358.2,816.3 359.4,813.7 360.8,811.4 362.7,809.5 363.7,807.0 365.5,805.0 363.3,801.7 361.4,800.3 359.4,798.9 357.3,797.9 355.4,796.4 353.4,795.1 351.1,794.1 349.0,792.8 347.1,791.2 345.2,789.6 346.7,787.2 347.9,784.7 348.9,782.7 350.1,780.8 348.3,778.8 346.8,776.5 348.2,774.6 349.4,772.5 350.6,770.4 352.3,768.8 353.4,766.6 355.0,764.5 356.1,762.0 357.8,760.0 359.0,757.6 360.0,755.1 361.5,752.8 362.2,750.2 360.6,748.6 358.6,747.5 357.4,745.5 355.3,744.5 356.6,742.4 358.4,740.7 360.2,739.1 361.3,736.8 363.2,735.2 364.4,733.0 366.5,731.6 367.9,729.6 369.8,728.3 371.4,726.6 373.3,725.4 374.6,723.4 376.6,722.2 378.2,720.6 379.9,719.0 381.5,717.4 383.5,716.2 385.3,714.8 386.7,712.9 388.4,711.4 390.6,710.2 392.3,708.3 394.7,707.5 396.7,706.1 399.0,705.0 401.0,703.5 402.7,701.7 404.9,700.5 406.6,698.4 408.6,696.6 410.2,694.4 411.6,692.5 413.7,691.4 415.2,689.6 417.0,688.1 418.7,686.5 420.9,685.6 422.5,683.9 421.2,681.9 420.4,679.6 419.7,677.3 418.9,675.1 420.3,673.2 420.6,670.7 422.0,668.8 423.2,666.7 424.2,664.6 423.9,662.1 423.2,659.8 422.6,657.5 421.3,655.3 420.7,652.9 420.0,650.6 419.9,648.1 419.3,645.7 418.1,643.5 419.5,641.5 421.1,639.8 422.8,638.0 424.4,636.3 426.3,634.7 428.0,633.1 429.4,631.1 431.2,629.5 433.1,628.3 435.4,628.0 437.5,627.3 439.7,626.8 441.9,626.5 443.9,625.5 446.0,624.6 448.1,624.0 450.3,623.4 452.3,622.5 453.7,620.4 456.1,619.3 457.8,617.4 459.6,615.7 461.3,613.9 462.8,611.9 465.0,610.9 467.2,610.0 469.2,608.9 471.6,608.4 471.1,606.0 469.9,603.9 469.8,601.4 471.0,599.3 472.6,597.7 474.1,595.9 475.7,594.3 477.0,592.3 478.5,590.5 480.4,589.1 482.2,587.7 484.1,586.6 486.2,585.8 487.9,584.4 490.3,584.1 492.1,582.8 493.8,581.3 495.8,580.3 497.9,579.5 498.6,577.1 499.5,574.8 500.5,572.5 501.7,570.5 503.8,569.3 505.4,567.7 506.4,565.6 507.9,563.8 509.1,561.8 510.6,560.1 512.2,558.5 513.7,556.8 515.6,555.4 516.5,553.2 517.9,551.4 519.8,550.0 520.1,547.7 519.5,545.5 518.9,543.3 519.1,541.0 518.9,538.8 521.1,537.4 523.6,537.1 526.1,536.6 528.4,535.6 530.7,534.6 533.0,533.5 532.5,531.3 532.4,529.1 532.0,526.9 532.1,524.7 534.8,524.3 537.4,523.4 540.0,523.0 542.6,522.1 541.6,519.1 540.9,516.0 538.5,515.7 536.3,514.5 533.9,514.2 531.6,514.0 529.4,514.6 527.2,515.0 525.0,515.3 522.9,515.8 520.7,516.7 518.5,516.7 516.3,517.3 514.2,518.0 512.0,518.4 509.7,518.5 507.5,518.6 507.2,515.5 507.5,512.5 509.2,510.9 511.0,509.3 512.1,507.1 513.7,505.4 515.2,503.4 516.4,501.3 517.4,499.1 518.1,496.7 519.3,494.0 520.7,491.4 523.7,490.6 526.8,490.5 527.4,487.8 528.3,485.1 529.5,482.6 528.3,480.7 527.8,478.5 526.8,476.5 529.1,476.5 531.3,476.0 533.4,475.1 535.6,474.7 538.2,475.5 540.8,476.4 543.6,476.3 546.1,477.4 548.8,476.9 551.5,476.5 554.1,475.7 556.7,474.7 559.0,475.4 561.4,475.6 563.8,475.7 566.0,476.8 568.4,476.8 570.7,477.4 569.3,479.4 568.0,481.5 567.5,484.0 566.3,486.1 566.0,489.2 565.4,492.3 567.5,493.2 569.8,493.4 572.1,493.2 574.2,494.0 576.2,495.2 578.0,496.6 579.5,498.4 581.8,498.2 583.9,497.4 585.9,496.1 588.2,495.8 590.7,495.5 593.1,495.1 595.3,494.0 597.6,494.8 600.0,495.0 602.3,495.8 604.4,495.0 606.3,493.7 608.4,492.7 610.9,492.8 612.8,491.4 615.2,489.8 617.5,487.9 619.8,486.1 617.5,484.0 614.6,482.6 615.8,480.0 617.2,477.4 619.0,478.9 621.1,480.0 623.3,480.9 625.4,479.7 627.6,478.9 629.8,478.1 632.1,477.4 631.8,474.3 632.1,471.2 631.3,468.8 630.1,466.6 629.5,464.2 631.4,462.9 633.1,461.4 635.5,460.9 637.1,459.2 639.1,458.1 640.8,456.5 642.7,455.0 644.7,453.7 646.1,451.7 647.9,450.2 650.6,450.0 653.2,448.9 655.8,448.2 658.4,447.5 661.0,447.1 663.6,446.1 666.3,446.2 668.9,445.8 668.0,448.3 667.1,450.7 665.4,452.8 665.4,456.3 663.0,456.9 660.9,458.4 658.4,458.9 660.2,460.4 661.7,462.2 663.6,463.6 665.4,465.1 667.7,464.6 670.1,464.5 672.5,464.2 674.7,463.5 676.9,462.9 678.8,461.5 681.1,461.2 683.1,460.1 685.3,459.3 687.6,459.0 689.7,458.0 691.8,457.2 693.6,455.5 695.5,453.9 697.4,452.3 698.8,450.2 701.7,450.4 704.6,450.9 707.5,451.1 708.6,453.2 709.6,455.3 710.5,457.5 711.8,459.5 712.8,461.6 715.1,461.0 717.5,460.4 719.8,459.8 722.0,460.4 724.3,460.3 726.5,460.6 728.8,460.8 731.1,460.2 733.3,460.6 735.6,460.7 737.8,460.0 739.8,458.8 741.4,457.0 743.4,455.8 745.6,455.0 747.4,453.5 749.6,452.8 751.6,451.0 753.7,449.4 756.3,448.4 758.4,446.7 760.7,445.7 762.8,444.6 764.5,442.7 766.9,441.9 768.9,440.5 771.0,441.3 773.4,441.5 775.4,442.9 777.7,443.2 779.9,444.2 782.4,443.8 784.6,445.0 787.0,445.0 788.4,446.7 789.7,448.6 790.5,450.7 792.3,452.2 794.7,453.5 797.6,453.7 800.0,455.0 802.8,455.7 805.5,456.6 808.0,453.8 810.3,454.8 812.6,455.8 815.0,456.2 817.1,455.2 819.3,454.3 821.5,453.6 823.9,453.2 826.0,452.2 823.7,451.8 821.8,450.3 819.7,449.5 819.0,445.5 820.5,443.1 823.2,442.7 826.0,442.4 827.5,440.2 829.6,438.5 831.6,436.8 835.5,438.0 837.4,439.5 839.5,440.8 841.4,442.0 843.4,443.1 842.6,445.3 841.0,447.1 844.3,446.8 847.4,445.5 848.0,442.4 848.1,440.0 848.1,437.6 847.4,435.3 851.3,434.5 851.3,431.3 849.0,429.0 846.4,428.7 844.0,427.6 841.7,427.4 839.5,426.6 837.8,428.2 835.5,429.0 834.0,430.8 833.0,433.0 830.7,433.5 828.4,433.9 826.0,433.7 822.9,435.3 820.5,434.0 818.4,432.2 815.8,431.3 814.5,429.3 812.5,427.9 810.8,426.2 809.5,424.2 811.1,422.3 812.0,420.0 809.5,417.9 812.0,414.3 814.0,412.9 816.1,411.6 818.0,410.0 818.4,407.3 819.7,404.8 820.3,402.2 822.0,400.1 822.9,397.6 826.0,395.8 828.8,394.7 831.6,393.7 834.0,392.0 837.1,391.7 839.5,390.0 841.0,386.3 843.4,386.0 845.7,386.5 848.0,386.7 849.4,389.1 851.3,391.0 852.0,393.2 851.4,395.4 852.0,397.6 854.0,399.7 855.0,397.6 856.8,396.0 857.5,393.4 857.3,390.7 857.6,388.0 860.0,387.9 861.8,389.8 863.4,392.0 863.9,394.6 864.0,397.2 865.0,399.7 868.5,398.9 870.7,398.2 873.0,398.0 874.7,400.1 875.8,402.6 873.7,404.3 871.7,406.0 871.0,410.0 872.6,411.5 873.8,413.4 873.4,416.6 872.2,419.5 874.5,419.4 876.8,419.5 879.0,420.3 881.5,421.4 883.7,423.0 886.4,424.2 886.0,421.0 887.6,417.9 885.2,415.5 882.0,414.0 882.0,410.0 884.3,408.6 886.8,407.6 888.4,406.8 890.0,410.8 892.3,412.4 894.8,413.8 897.0,415.5 899.3,416.5 901.8,417.0 901.8,419.5 897.9,419.5 899.4,423.4 901.2,425.3 902.6,427.4 902.6,430.5 906.6,432.1 908.8,431.3 910.9,430.2 913.2,429.6 915.4,428.5 917.7,427.9 920.0,427.4 921.9,425.8 924.5,425.3 926.6,423.9 928.6,422.4 930.9,421.5 933.1,421.8 935.2,422.6 937.5,422.0 939.6,423.1 941.8,423.1 944.0,423.4 946.2,424.1 948.4,424.1 950.5,424.9 952.5,425.9 954.5,426.9 956.4,428.1 958.7,428.4 960.7,429.4 963.1,429.7 965.5,429.5 967.9,429.4 970.3,429.1 972.7,429.0 975.1,428.7 977.5,429.1 979.7,429.7 981.8,430.7 983.5,432.3 985.7,432.9 987.8,433.8 989.9,434.7 991.6,436.4 993.6,437.5 995.7,438.3 997.9,438.9 1000.0,439.8 1002.0,440.9 1003.9,442.1 1006.1,442.8 1008.0,444.0 1010.1,444.9 1011.8,446.6 1013.8,447.6 1016.1,448.1 1017.6,450.1 1019.4,451.9 1020.2,454.4 1022.3,456.0 1023.8,458.0 1025.6,459.8 1026.7,462.1 1029.1,462.8 1031.5,463.7 1033.9,464.5 1036.3,465.3 1037.3,467.6 1037.8,470.1 1039.0,472.3 1039.5,474.8 1040.4,477.1 1040.7,479.6 1042.8,481.6 1045.1,483.4 1046.8,485.8 1049.1,486.2 1051.1,487.4 1053.3,488.2 1055.2,489.4 1057.4,490.2 1057.1,492.7 1056.6,495.1 1056.4,497.6 1056.1,500.0 1056.1,502.5 1057.4,505.1 1059.4,507.1 1060.9,509.5 1059.7,512.2 1058.2,514.7 1055.8,514.5 1053.6,515.7 1051.2,515.6 1049.5,517.4 1048.0,519.5 1047.0,521.8 1045.1,523.5 1043.9,525.7 1043.0,528.0 1042.5,530.5 1039.8,532.1 1037.2,534.0 1035.7,536.1 1034.3,538.2 1033.6,540.8 1031.9,542.8 1031.0,545.1 1030.2,547.5 1029.0,549.7 1028.1,552.0 1027.2,554.3 1026.7,556.8 1025.9,559.2 1024.9,561.6 1024.4,564.1 1023.7,566.6 1023.2,569.1 1024.4,571.2 1025.4,573.3 1026.2,575.6 1026.7,577.9 1027.4,580.2 1028.3,582.5 1028.1,585.0 1029.0,587.2 1029.5,589.6 1030.2,591.9 1028.9,596.1 1026.8,597.8 1024.8,599.5 1023.0,601.4 1021.0,603.2 1021.9,606.7 1024.0,605.7 1026.4,606.0 1028.6,605.5 1030.7,604.7 1032.9,604.2 1035.1,603.7 1036.3,605.7 1037.7,607.5 1039.7,606.3 1042.2,606.2 1044.2,604.9 1046.5,604.4 1049.0,603.9 1051.5,604.0 1054.0,604.5 1056.4,603.8 1058.9,604.3 1061.4,604.0 1063.5,605.9 1066.1,606.9 1068.4,608.4 1070.9,608.8 1073.3,609.5 1075.7,610.2 1078.2,610.8 1080.7,611.1 1082.7,612.4 1084.7,613.6 1087.1,614.2 1089.1,615.4 1091.1,616.7 1093.0,618.1 1095.7,617.8 1098.2,616.7 1100.9,616.3 1101.5,618.5 1102.7,620.5 1103.3,622.8 1103.5,625.1 1102.6,627.3 1101.0,629.1 1100.0,631.2 1100.0,633.6 1100.3,636.1 1100.9,638.5 1100.9,640.9 1103.2,642.1 1105.5,643.3 1107.8,644.5 1110.2,645.4 1112.3,647.0 1114.6,648.0 1117.1,647.9 1119.3,649.4 1121.7,650.0 1124.3,649.6 1126.5,650.7 1128.9,651.4 1130.0,653.7 1131.3,655.9 1133.2,657.7 1134.8,659.7 1136.0,661.9 1138.6,662.9 1140.6,665.0 1143.4,665.6 1145.6,667.2 1147.8,666.6 1149.8,665.5 1152.0,665.2 1154.3,665.0 1156.2,663.4 1158.6,663.5 1160.6,662.5 1162.9,662.2 1164.9,661.1 1168.0,660.9 1171.0,660.2 1170.9,658.0 1171.9,655.8 1171.7,653.6 1171.4,651.3 1171.6,649.1 1172.3,647.0 1172.5,644.8 1172.8,642.6 1175.1,642.7 1177.4,642.9 1179.7,643.5 1182.0,643.8 1184.2,644.4 1185.2,642.3 1185.0,639.8 1186.4,637.9 1186.8,635.6 1188.3,633.9 1188.8,631.6 1190.7,630.1 1191.7,628.1 1193.1,626.3 1193.9,624.2 1196.5,623.4 1199.1,622.9 1201.8,622.5 1203.4,624.2 1204.5,626.3 1206.4,627.8 1208.2,629.4 1209.6,631.2 1211.7,632.6 1213.8,633.9 1216.0,635.2 1218.1,636.7 1219.6,638.8 1221.9,640.0 1221.5,642.4 1220.2,644.6 1220.3,647.2 1219.6,649.6 1218.7,651.9 1218.5,654.4 1217.5,656.7 1217.6,659.0 1217.0,661.2 1217.1,663.5 1217.2,665.7 1217.4,668.0 1217.0,670.2 1217.5,672.5 1215.5,674.3 1214.3,676.7 1212.6,678.7 1211.6,681.2 1209.6,683.0 1210.1,685.2 1211.1,687.2 1211.5,689.4 1212.3,691.5 1213.2,693.5 1211.6,695.1 1210.0,696.7 1207.6,697.3 1206.4,699.4 1204.4,700.5 1205.7,703.1 1207.0,705.8 1205.6,707.7 1204.1,709.4 1202.2,710.9 1200.9,712.8 1201.0,715.3 1202.3,717.4 1202.5,719.8 1203.4,722.1 1203.8,724.5 1204.4,726.8 1206.8,726.5 1209.2,726.0 1211.6,725.8 1214.0,726.0 1215.8,727.4 1216.8,729.5 1218.7,730.7 1220.5,732.1 1221.9,733.9 1221.2,736.2 1220.8,738.5 1221.1,740.9 1221.1,743.3 1220.8,745.6 1220.6,748.0 1220.1,750.3 1220.0,752.6 1219.3,754.9 1216.8,756.5 1214.0,757.5 1211.3,756.0 1208.8,754.0 1206.5,753.3 1204.2,752.4 1201.8,752.0 1199.4,751.8 1197.0,751.2 1194.7,750.5 1192.9,752.2 1191.2,754.0 1188.8,753.3 1186.5,752.4 1184.2,751.4 1182.0,749.0 1180.7,746.1 1178.3,745.5 1176.2,743.9 1173.7,743.5 1173.7,741.0 1174.6,738.7 1175.1,736.3 1175.4,733.9 1174.0,731.0 1171.9,728.6 1169.9,730.6 1167.5,732.1 1165.3,731.5 1163.2,730.4 1161.1,731.3 1158.8,731.8 1156.6,732.4 1154.3,732.5 1152.1,733.3 1149.9,733.9 1147.9,735.5 1145.6,735.6 1145.7,737.9 1144.5,740.0 1143.9,742.1 1143.9,744.4 1142.3,746.2 1140.6,747.8 1139.5,750.0 1137.5,751.5 1135.5,752.8 1134.2,754.9 1134.1,757.6 1134.3,760.2 1134.4,762.8 1135.1,765.4 1135.0,768.0 1134.7,770.5 1134.2,773.0 1133.4,775.5 1132.8,778.0 1132.6,780.5 1134.0,782.9 1135.9,784.9 1137.9,786.8 1140.4,787.0 1142.9,787.1 1145.5,786.8 1148.0,786.9 1150.5,786.8 1152.9,788.2 1154.5,790.6 1156.8,792.1 1156.6,795.3 1155.8,798.4 1153.7,799.8 1152.2,801.8 1150.5,803.7 1149.7,805.9 1148.8,808.1 1147.6,810.1 1146.2,812.0 1145.3,814.2 1146.4,816.2 1148.2,817.8 1149.5,819.6 1150.3,821.8 1151.6,823.7 1152.9,825.7 1154.5,827.5 1156.0,829.3 1157.1,831.5 1159.0,833.1 1160.0,835.3 1158.8,837.8 1157.2,840.2 1155.8,842.6 1153.1,842.6 1150.5,843.5 1147.8,843.8 1145.3,844.7 1143.2,845.4 1141.1,846.4 1138.9,846.8 1136.6,845.5 1134.7,843.7 1135.6,841.0 1135.7,838.1 1135.8,835.3 1133.6,833.9 1131.3,832.5 1129.5,830.5 1127.4,828.9 1126.8,826.7 1125.8,824.7 1124.9,822.7 1124.5,820.4 1124.1,818.2 1122.6,816.4 1122.1,814.2 1120.6,812.1 1119.8,809.6 1118.8,807.3 1118.0,804.8 1116.8,802.6 1114.0,803.3 1111.2,803.0 1108.4,803.7 1105.3,802.9 1102.1,802.6 1100.0,803.3 1098.0,804.3 1095.6,804.2 1093.8,805.6 1091.5,805.8 1089.5,806.8 1087.6,808.6 1085.4,810.2 1083.0,811.4 1081.0,813.2 1078.8,812.3 1077.0,810.6 1074.7,810.0 1072.6,812.1 1070.5,814.2 1070.4,816.6 1070.0,818.9 1069.3,821.2 1068.6,823.4 1068.4,825.8 1066.1,825.5 1063.9,826.5 1061.6,826.4 1059.3,826.8 1056.9,826.1 1054.7,826.8 1052.3,826.8 1050.0,826.4 1047.7,826.0 1045.5,825.2 1043.2,824.7 1041.3,823.3 1039.1,822.2 1037.0,821.4 1035.0,820.0 1032.6,819.5 1032.0,817.3 1030.3,815.7 1029.1,813.9 1028.8,811.5 1027.6,809.7 1026.3,807.9 1024.1,806.7 1022.7,804.6 1020.7,803.3 1018.9,801.6 1018.8,799.3 1018.7,797.0 1018.5,794.7 1018.4,792.4 1018.7,790.1 1018.7,787.8 1019.4,785.5 1018.5,783.2 1019.4,780.8 1018.6,778.5 1018.7,776.2 1019.3,773.9 1019.3,771.6 1018.8,769.3 1018.4,767.0 1018.9,764.7 1016.8,766.5 1014.8,768.3 1012.6,770.0 1010.7,771.8 1009.5,774.2 1006.3,774.0 1003.2,773.2 1002.0,771.1 1001.4,768.8 999.5,767.1 998.9,764.7 996.5,765.1 994.0,765.1 991.5,765.5 989.2,766.6 986.7,767.0 984.2,766.8 983.0,769.7 981.0,772.1 979.7,774.0 979.6,776.4 978.2,778.3 977.2,780.3 976.8,782.6 978.7,784.6 980.5,786.6 982.1,788.9 981.9,791.6 982.5,794.2 983.2,796.8 983.2,799.5 983.7,802.2 984.9,804.7 985.8,807.3 986.3,810.0 986.2,812.7 984.8,815.0 984.0,817.5 983.7,820.0 983.2,822.6 981.7,824.5 981.5,827.1 980.2,829.1 978.9,831.1 978.2,833.2 977.0,835.1 976.8,837.4 975.0,839.2 974.1,841.7 972.6,843.7 971.1,846.0 969.2,847.9 967.4,850.0 966.4,852.4 964.9,854.6 964.6,857.3 963.2,859.5 960.6,860.6 958.1,862.1 955.8,863.7 953.8,865.1 952.0,866.8 950.3,868.6 948.7,870.5 946.9,872.1 945.1,873.8 943.2,875.3 943.1,877.8 944.1,880.3 944.1,882.8 943.7,885.4 944.2,887.9 942.2,889.2 940.2,890.4 938.1,891.5 935.8,892.0 933.8,893.3 931.6,894.2 930.4,896.9 929.8,899.7 929.5,902.6 928.0,904.5 927.6,906.9 926.8,909.2 925.7,911.3 924.3,913.2 923.2,915.3 924.9,916.8 926.9,917.9 928.8,919.0 930.5,920.5 931.0,923.3 931.1,926.1 931.6,928.9 933.3,930.4 935.0,931.8 936.8,933.3 938.7,934.5 940.9,935.4 942.2,937.3 944.2,938.4 943.3,940.6 942.0,942.6 941.1,944.8 939.7,946.7 938.9,948.9 938.2,951.2 937.1,953.3 936.0,955.4 935.1,957.5 933.7,959.5 931.7,958.4 929.5,958.0 927.4,957.4 925.2,956.2 923.1,954.7 921.1,953.2 918.8,953.5 916.9,954.9 914.8,956.0 912.5,956.2 910.5,957.4 909.5,953.2 911.4,951.2 913.4,949.3 914.7,946.8 913.3,944.9 912.6,942.6 911.9,940.3 910.8,938.2 909.9,936.1 908.4,934.2 906.9,932.1 906.1,929.8 905.3,927.4 903.2,925.6 901.5,923.5 900.4,920.8 898.2,919.1 896.2,918.0 894.4,916.6 892.1,916.2 890.3,914.7 888.0,914.1 885.9,913.3 884.0,912.0 885.1,909.3 886.0,906.6 886.3,903.7 887.6,901.8 889.5,900.6 891.1,899.0 892.4,897.1 894.1,895.7 895.8,894.2 896.0,891.8 897.0,889.5 895.1,888.1 893.5,886.4 892.1,884.4 890.5,882.7 888.7,881.2 886.4,880.5 884.1,879.7 882.1,878.4 880.1,877.1 877.7,876.6 875.7,875.3 873.8,877.4 871.9,879.5 869.7,881.2 867.5,879.7 865.0,878.8 862.4,878.1 860.3,876.5 857.8,876.4 855.5,875.7 853.2,875.0 850.8,874.4 848.4,874.1 847.2,871.5 846.5,868.7 846.1,865.8 844.7,864.0 842.8,862.7 841.3,861.0 839.9,858.9 838.7,856.8 838.2,854.3 836.4,852.4 835.4,850.1 834.2,848.0 831.8,847.0 829.4,845.7 827.3,844.1 825.0,842.8 822.4,842.1 820.5,840.4 818.6,838.8 817.3,836.6 815.3,835.0 814.5,832.7 813.8,830.4 814.3,827.8 813.3,825.6 812.9,823.2 814.9,821.7 816.4,819.6 818.5,818.2 820.0,816.1 820.1,813.7 819.9,811.3 819.9,808.9 820.6,806.6 820.8,804.2 821.3,801.9 820.5,799.4 821.2,797.1 821.2,794.7 820.7,792.4 820.4,790.0 819.6,787.7 819.4,785.3 819.2,782.9 818.8,780.5 817.4,778.4 815.3,777.0 813.0,778.1 810.5,778.4 808.1,778.8 805.6,779.3 803.4,780.5 801.5,782.0 799.6,783.2 797.1,783.6 795.0,784.8 793.3,786.4 791.5,788.0 789.2,788.8 788.1,791.7 788.0,794.7 787.1,796.9 785.6,798.9 784.9,801.2 783.7,803.3 783.4,805.8 782.1,807.8 780.0,809.2 778.5,811.4 776.5,812.9 774.2,814.2 772.6,816.1 770.4,817.0 768.8,818.8 766.9,819.9 764.8,820.9 762.8,822.0 760.8,823.2 758.8,824.6 757.0,826.2 754.9,827.5 752.5,828.4 750.4,829.5 748.9,831.7 746.6,832.6 745.9,835.0 745.4,837.4 747.0,839.2 749.3,840.2 750.5,842.4 752.7,843.4 754.2,845.3 756.0,846.8 756.9,849.0 757.8,851.1 759.1,853.1 759.9,855.3 760.8,857.5 760.3,859.7 760.1,861.8 759.4,864.0 759.3,866.2 758.9,868.3 758.4,870.5 756.6,872.4 754.2,873.4 752.2,875.0 750.1,876.5 748.0,877.6 745.7,877.8 743.5,878.6 741.4,879.7 739.4,880.7 737.1,881.2 736.8,883.4 736.8,885.7 736.5,887.9 735.8,890.0 735.8,892.3 735.1,894.4 734.7,896.6 733.7,899.0 733.3,901.5 731.7,903.6 731.4,906.2 730.0,908.4 727.6,908.5 725.2,908.8 722.9,909.4 720.6,910.3 718.1,910.1 715.8,910.6 713.4,910.8 711.4,912.5 710.6,915.0 708.4,916.5 706.7,918.3 705.4,920.5 704.0,922.6 703.4,924.9 703.7,927.4 702.6,929.7 702.8,932.1 700.6,931.9 698.4,931.3 696.2,931.1 694.0,931.8 691.8,930.9 689.6,930.6 687.4,930.9 684.9,930.5 682.6,929.3 680.4,928.0 677.9,927.4 675.8,929.5 673.2,930.9 672.1,928.7 670.0,927.2 669.0,924.9 666.9,923.4 665.8,921.3 664.6,919.1 662.5,917.6 661.3,915.5 659.0,916.0 656.6,915.9 654.2,916.3 651.9,916.8 649.5,916.8 647.1,916.7 644.3,915.9 642.1,913.9 639.3,913.2 637.5,914.6 635.6,916.0 634.4,918.2 632.2,919.3 631.0,921.4 629.0,922.6 627.2,924.1 625.6,925.8 623.7,927.1 621.5,927.7 619.7,929.2 617.8,930.3 615.7,931.1 614.2,933.0 611.7,933.3 610.0,934.8 608.2,936.2 606.2,937.2 603.9,936.9 601.7,937.5 599.4,936.7 597.1,937.1 594.8,937.4 592.5,936.9 590.3,937.3 588.0,937.2 586.3,938.8 584.1,939.5 582.6,941.4 580.2,942.0 578.7,943.8 576.5,944.7 574.4,945.6 572.7,947.3 570.9,948.6 568.6,948.4 566.3,948.8 564.0,949.1 561.8,949.1 559.5,949.0 557.2,948.5 554.9,948.7 552.6,948.6 551.3,946.8 550.2,944.7 548.2,943.4 546.9,941.5 545.8,939.5 545.0,937.3 543.4,935.5 542.5,933.5 541.9,931.2 540.7,929.2 540.0,927.0 538.9,925.0 538.3,922.7 537.3,920.6 536.0,918.7 535.5,916.4 534.4,914.4 533.0,912.5 531.4,910.8 530.8,908.4 528.8,907.0 527.4,905.1 526.0,903.3 525.2,901.0 524.1,899.0 522.7,897.1 521.0,895.5 519.5,893.6 518.4,891.6 516.3,893.0 513.8,893.3 511.5,894.2 509.3,895.4 507.0,896.1 507.4,893.8 507.4,891.5 508.2,889.3 508.3,887.0 508.0,884.7 509.0,882.5 508.3,880.1 509.1,877.9 509.3,875.6 507.1,874.9 504.9,874.4 502.7,873.8 500.8,872.3 498.3,872.3 496.4,871.0 494.4,869.9 491.9,869.9 489.9,868.8 489.7,866.5 490.3,864.2 490.3,861.9 490.5,859.7 490.9,857.4 490.3,855.0 490.5,852.8 490.7,850.5 491.0,848.2 491.8,845.9 493.9,844.4 495.1,842.3 496.3,840.2 496.9,837.8 498.9,836.3 500.1,834.2 501.1,832.0 502.4,830.0 501.3,828.0 499.6,826.4 498.1,824.7 496.6,822.9 495.4,821.0 493.8,819.3 492.7,817.3 491.7,815.2 490.3,813.4 488.8,811.7 488.4,809.3 487.5,807.1 486.5,804.9 487.4,802.6 488.8,800.7 489.9,798.5 491.3,796.5 492.2,794.2 493.1,792.0 494.6,790.0 495.6,787.8 493.5,786.6 490.9,786.8 488.9,785.4 486.3,785.6 484.1,784.7 481.8,784.1 479.7,782.9 477.5,782.0 475.1,781.5 472.7,781.3 470.6,780.1 468.2,779.8 465.8,780.0 463.5,780.1 461.1,779.4 458.8,779.7 456.4,779.6 454.1,779.6 451.7,779.3 449.3,779.8 447.0,779.4 444.6,779.6 442.3,779.4 439.9,779.9 437.6,779.6 435.2,779.8 433.2,781.0 431.3,782.4 429.4,783.7 427.1,784.6 425.4,786.3 423.0,786.8 421.4,788.7 419.2,789.6 417.0,790.6 414.7,791.0 412.2,790.6 410.0,791.7 407.7,792.4 405.4,793.0 403.1,793.5 400.7,793.3 398.4,794.0 396.5,795.4 394.6,796.8 392.7,798.2 391.4,800.2 389.2,801.3 387.5,802.9 385.3,804.0 383.5,805.5 381.9,807.2 380.4,809.6 380.1,812.5 378.6,814.8 377.3,816.6 376.4,818.6 375.4,820.6 375.3,823.0 374.3,825.0 373.1,826.9 374.8,825.4 376.7,824.3 379.1,823.9 380.8,822.5 383.0,825.8 381.6,827.8 380.7,830.1 379.7,832.4 382.0,833.5 384.4,834.0 386.9,834.4 389.4,834.9 391.7,835.6 394.0,836.8 393.4,839.0 393.6,841.3 392.9,843.4 391.2,845.7 389.3,847.8 387.4,849.9 385.4,851.5 383.1,852.3 380.9,853.4 378.5,854.1 376.4,855.4 374.3,857.3 372.1,859.2 369.8,860.9 367.7,862.0 366.2,863.8 364.1,865.0 362.5,866.7 361.0,868.6 358.9,869.7 356.5,869.5 354.2,869.1 351.9,868.5 349.4,868.6 347.1,867.9 344.8,867.8 342.4,867.5 340.2,870.8 337.4,870.6 334.7,869.7 332.5,870.2 330.7,871.9 328.3,872.0 326.5,873.6" fill="#b8ceda" stroke="#2a2a2a" stroke-width="0.9" stroke-linejoin="round"/>
<polygon points="860,413.1 865.5,414.7 867.9,413.1 869.5,419.5 863.1,421 861.6,417.9" fill="#fff" stroke="#222" stroke-width="0.9"/>
<polygon points="920.8,915.5 922.4,915.2 922.8,920.5 921,920.8" fill="#fff" stroke="#222" stroke-width="0.8"/>
<g fill="none" stroke="#151515" stroke-width="1.05" stroke-linejoin="round">
<polyline points="366.0,806.1 368.3,806.3 370.3,807.2 372.3,808.5 374.3,809.4 376.7,809.1 378.7,810.3 380.8,811.0"/>
<polyline points="366.6,808.3 368.8,809.2 370.8,810.4 373.3,810.7 375.3,811.9 377.6,812.6 379.7,813.7"/>
<polyline points="357.8,818.7 359.6,820.2 362.0,820.8 363.6,822.6 366.0,823.2 368.1,824.3 369.9,825.9 372.0,826.9"/>
<polyline points="424.2,665.4 426.5,664.7 428.7,663.6 431.2,663.4 433.4,662.1 436.0,662.1 438.2,661.1 440.4,660.4 442.5,659.6 444.6,658.6 446.6,657.4 448.7,656.6 450.8,655.7 453.1,655.3 454.9,653.6 457.4,653.6 459.3,652.3 461.0,650.5 463.1,649.2 465.1,647.8 467.5,647.0 469.2,645.2 471.1,643.6 473.4,642.7 475.1,640.9 475.8,643.1 476.0,645.5 476.4,647.8 476.6,650.2 477.0,652.5 477.6,654.7 478.3,657.0 478.6,659.3 480.7,660.5 482.8,661.6 484.3,663.6 486.5,664.6"/>
<polyline points="504.9,572.5 506.0,575.2 507.5,577.7 506.9,580.0 507.2,582.4 506.6,584.6 505.9,586.9 505.8,589.2 506.0,591.6 505.3,593.8 504.9,596.1 507.1,595.5 508.8,593.8 510.7,592.8 512.8,591.9 515.0,591.3 517.1,590.4 518.9,589.1 521.2,588.3 523.7,587.9 526.1,587.5 528.5,587.2 531.0,586.9 533.3,586.1 535.8,585.9 538.2,585.6 540.0,587.1 540.8,589.5 542.6,591.0 544.6,592.3 545.4,594.7 547.6,595.9 548.8,597.9 548.5,600.1 547.4,602.2 547.1,604.4 547.0,606.7 544.9,608.2 543.2,610.2 541.5,612.2 539.2,613.5 537.4,615.4 538.0,617.6 538.0,619.9 538.0,622.2 538.6,624.5 538.2,626.8 540.9,628.1 543.5,629.5"/>
<polyline points="505.8,573.0 508.1,572.7 510.4,571.9 512.6,571.1 514.9,570.6 517.1,569.8 519.2,568.8 521.6,568.6 523.4,567.2 525.0,565.6 527.0,564.4 528.9,563.1 530.3,561.2 532.2,559.9 534.0,558.6 535.5,556.9 537.2,555.2 539.3,554.2 541.1,552.9 542.6,551.1 545.0,551.2 547.4,550.9 549.9,550.8 552.3,550.4 554.7,550.1 557.1,549.7 559.5,549.3 561.9,549.3 562.4,546.9 562.2,544.3 562.9,541.9 563.6,539.5 563.7,537.0 565.9,537.4 568.1,537.5 570.4,537.2 572.6,537.6 574.8,537.8 577.1,538.1 579.3,538.0 581.5,538.5 583.7,538.9 586.0,538.3 588.2,538.8 590.5,538.0 592.7,537.1 594.7,535.7 597.0,534.8 599.4,534.3 601.2,532.4 603.6,531.9 605.8,530.9 608.1,530.8 610.3,531.7 612.6,532.2 614.9,532.0 617.2,531.8 619.5,532.5 621.8,532.8 624.0,533.2 626.3,533.3 628.6,533.5 630.7,532.6 632.8,531.8 634.6,530.5 636.6,529.4 638.8,528.9 640.5,527.2 642.6,526.5"/>
<polyline points="531.2,626.0 529.1,627.2 527.3,628.8 525.0,629.9 523.4,631.8 520.9,632.4 519.3,634.4 517.2,635.6 516.0,637.6 514.3,639.1 512.7,640.6 511.4,642.6 509.6,643.9 508.0,645.6 506.3,647.0 504.9,648.8 503.3,650.4 501.7,651.9 500.1,653.3 498.0,654.3 496.2,655.6 494.8,657.4 493.4,659.1 491.3,660.0 489.9,661.8 488.4,663.4 486.5,664.6 485.3,666.6 483.2,667.9 481.7,669.6 480.4,671.6 481.7,673.5 483.2,675.1 484.5,676.9 486.2,678.5 487.4,680.4 489.1,683.0 491.1,684.3 493.6,684.6 495.6,685.8 497.9,686.5 500.2,686.2 502.4,685.5 504.5,684.5 506.7,683.9 508.9,684.1 511.0,684.8 513.3,684.8 515.4,685.6 515.8,683.3 515.2,680.9 515.4,678.6 514.0,675.7 511.9,673.3 512.3,670.9 513.0,668.6 513.7,666.3 515.1,664.0 517.0,662.0 518.7,664.3 520.6,666.5 522.0,669.0 524.2,670.0 525.7,672.1 527.7,673.3 528.1,670.5 528.6,667.7 529.5,665.0 529.3,662.5 529.5,659.9 529.4,657.4 529.7,654.8 529.5,652.3 531.1,654.2 533.0,655.8 534.2,657.8 534.7,660.2 535.8,662.3 537.6,664.0 538.2,666.3"/>
<polyline points="517.2,635.6 518.2,637.7 519.5,639.6 520.9,641.4 522.8,642.8 523.5,645.1 525.0,646.9 526.8,648.3 527.7,650.5 529.8,651.9 530.9,654.4 533.0,655.8"/>
<polyline points="511.0,643.5 512.1,645.5 513.8,647.3 515.2,649.1 516.4,651.1 517.6,653.1 518.4,655.4 520.1,657.1 521.5,658.9 522.5,661.1 523.0,663.3 523.9,665.3 525.4,667.1 525.6,669.4 526.7,671.3 527.7,673.3"/>
<polyline points="504.9,648.8 506.1,651.0 507.7,653.0 508.9,655.2 510.5,657.2 511.9,659.3 513.7,661.1 517.0,662.0"/>
<polyline points="481.2,697.9 483.1,696.2 485.5,695.1 487.4,693.5 488.5,695.8 489.5,698.3 490.9,700.5 488.9,701.5 486.6,701.9 484.7,703.2 483.0,700.5 481.2,697.9"/>
<polyline points="491.8,699.6 493.3,697.7 494.9,696.0 496.5,694.2 498.5,692.7 499.8,690.7 501.8,689.3 503.5,687.6 504.7,689.7 505.1,692.0 505.9,694.3 506.7,696.5 505.5,698.4 504.0,700.2 503.1,702.4 500.8,702.7 498.6,701.6 496.3,701.8 494.1,701.5 491.8,701.4 491.8,699.6"/>
<polyline points="553.2,645.3 555.8,645.8 558.4,646.0 557.6,648.2 557.5,650.5 555.2,650.4 553.0,650.0 553.0,647.6 553.2,645.3"/>
<polyline points="543.5,629.5 545.8,629.4 547.6,627.8 549.9,627.8 552.1,627.1 554.0,625.9 556.3,625.8 558.5,625.3 560.7,624.9 562.6,623.7 564.9,623.7 566.9,622.6 569.0,621.9 571.3,621.7 573.3,620.7 575.5,623.1 576.8,626.0 574.9,627.6 573.2,629.4 571.7,631.4 569.8,633.0 570.8,635.4 572.6,637.3 573.8,639.6 575.1,641.8 573.7,643.5 572.1,645.1 571.1,647.2 569.6,648.8 568.1,650.5 570.4,650.7 572.6,651.1 574.8,651.6 577.1,651.3 579.3,652.1 581.6,651.9 583.8,652.3 586.1,652.3 588.3,652.8 590.5,653.5 592.8,653.4 595.1,653.8 597.4,653.6 599.6,654.0 600.7,656.9 601.4,660.0 599.7,661.7 597.6,663.0 595.8,664.5 594.0,666.1 591.6,664.9 593.0,666.8 595.2,667.8 596.5,669.8 595.4,672.0 594.3,674.2 593.8,676.6 593.4,679.1 592.3,681.3 591.7,683.7 590.3,685.8 589.1,688.2 589.6,690.4 589.0,692.7 589.6,695.0 589.7,697.2 589.8,699.5 590.3,701.7 592.6,703.0 595.2,703.7 597.7,704.6 600.2,705.4 602.1,707.6 604.1,709.7 606.3,711.6 605.9,714.0 605.5,716.5 605.7,719.0 605.1,721.4 603.1,723.7 601.4,726.3 600.8,723.9 600.2,721.4 597.0,721.7 594.0,722.6 594.4,724.9 594.4,727.2 594.5,729.5 593.7,731.7 593.5,734.0 593.8,736.3 594.0,738.6 591.6,740.4 588.9,741.6 586.7,743.5 584.8,745.0 583.2,746.9 581.7,748.8 580.0,750.5 578.1,752.1 576.1,753.8 574.1,755.5 571.9,757.0 570.6,755.2 569.5,753.3 567.5,754.1 565.3,754.8 563.8,756.7 561.5,757.2 559.6,758.2 558.8,760.3 557.5,762.1 555.7,763.6 554.7,765.6 553.1,767.2 552.3,769.3 549.8,769.4 547.4,769.8 544.9,769.3 541.9,770.1 538.9,770.7 537.5,772.4 535.9,774.0 534.6,775.7 533.7,777.9 532.5,779.7 531.5,781.7 529.8,783.2 529.0,781.1 527.7,779.3 526.7,777.2 525.6,775.3 525.2,773.0 523.0,771.6 521.7,769.2 519.4,767.8 518.3,765.4 516.1,763.9 513.9,764.7 511.5,764.2 509.3,765.4 507.1,765.9 504.6,765.5 502.4,766.1 500.5,764.6 499.2,762.5 497.1,761.2 495.6,759.3 497.6,756.7 500.2,754.7 502.6,753.8 504.9,752.6 507.2,751.6 509.4,750.4 511.6,749.0 509.7,747.4 508.6,745.1 507.0,743.3 504.7,743.1 502.4,743.3 500.1,742.8 497.9,743.6 495.6,742.8 493.3,743.3 492.8,740.5 491.2,737.9 491.0,735.0 490.5,732.3 491.2,729.6 491.3,726.9 491.0,724.2 493.1,722.8 495.5,722.1 497.9,721.6 500.0,720.0 502.4,719.4 504.6,718.4 506.4,716.7 508.4,715.4 509.0,713.0 510.3,710.9 511.5,708.8 512.3,706.6 513.6,704.5 514.0,702.0 515.4,700.0 516.8,698.3 517.6,696.2 518.9,694.4 518.4,692.2 517.6,690.2 516.7,688.1 516.0,686.0 515.4,683.9"/>
<polyline points="543.5,629.5 543.2,632.1 543.0,634.8 543.2,637.4 543.5,640.0 544.5,642.1 545.8,644.1 547.1,646.1 547.3,648.6 548.8,650.5 547.5,652.5 546.4,654.6 545.8,656.9 544.5,658.9 543.5,661.1 541.4,662.5 539.7,664.3 538.2,666.3"/>
<polyline points="578.1,752.1 578.6,754.3 579.5,756.3 580.0,758.5 580.5,760.7 579.2,763.0 578.8,765.6 577.5,768.0 576.8,770.5 576.7,773.0 576.4,775.4 576.5,777.8 576.8,780.3 574.5,782.1 572.2,784.0 569.5,785.2 570.2,787.6 570.4,790.1 570.6,792.6 570.8,795.1 571.1,797.6 571.9,800.0 573.5,801.7 573.9,804.2 575.4,806.0 574.8,808.5 574.4,811.1 574.5,813.7 574.3,816.3"/>
<polyline points="495.6,787.8 497.7,789.3 499.1,791.5 501.1,793.2 503.1,794.8 504.8,796.7 507.0,798.1 508.3,800.3 509.7,802.4 510.3,804.9 511.2,807.3 513.0,809.3 513.8,811.7 514.9,813.8 516.1,815.8 518.0,817.2 519.0,819.4 520.3,821.3 521.8,823.1 522.8,825.2 524.1,827.1 525.0,829.2 525.6,831.5 526.5,833.6 527.8,835.5 529.2,837.4 529.5,839.8 530.5,841.8 532.1,843.7 532.7,845.9 533.4,848.1 534.4,850.2 535.8,852.1 536.8,854.1 537.8,856.2 539.8,855.0 541.5,853.4 543.4,852.2 545.4,850.9 547.6,850.1 549.4,848.6 551.4,847.5 553.3,846.1 555.3,845.0 557.2,843.7 558.1,841.6 559.3,839.5 561.4,838.2 562.1,835.9 563.1,833.8 564.8,832.1 566.2,830.3 566.9,828.0 568.5,826.3 569.7,824.3 571.0,821.9 572.6,819.8 573.5,817.2 575.4,815.2"/>
<polyline points="575.4,814.0 576.7,811.7 579.3,810.4 580.9,808.3 582.3,806.0 584.8,805.4 587.4,805.0 589.9,804.1 592.5,803.8 592.2,806.6 592.5,809.5 594.6,808.5 597.1,808.1 599.2,807.0 601.4,806.1 603.6,805.3 605.5,803.6 607.6,802.5 609.8,801.7 612.0,800.8 614.1,799.7 616.5,799.2 618.5,798.0 620.8,797.8 623.1,797.4 625.1,796.2 627.4,796.0 629.5,795.2 631.4,793.6 633.7,793.4 635.8,792.6 637.7,791.5 639.5,790.2 641.9,789.9 643.5,788.2 645.6,787.5 647.6,786.5 649.8,785.8 651.6,784.4 653.4,783.1 655.4,782.2 657.5,783.2 659.7,784.0 661.4,785.9 663.5,787.0 665.9,787.3 668.1,788.2 670.0,789.5 672.0,790.8 673.8,789.3 676.0,788.5 677.9,787.2 679.8,785.8 681.1,783.8 683.5,783.1 685.3,781.7 687.2,780.4 689.3,779.3 690.6,777.2 692.5,775.9 694.8,775.2 696.8,774.0 698.4,772.3 700.6,772.0 702.6,771.0 704.9,770.8 707.1,770.4 709.0,769.2 711.3,768.9 713.4,768.3 715.6,768.0 716.7,766.0 718.5,764.5 719.7,762.6 721.2,760.9 722.9,759.4 721.9,757.0 721.7,754.5 724.0,753.1 725.7,751.0 728.3,750.1 730.3,748.4 732.7,748.7 735.1,749.1 737.1,750.7 739.6,750.6 741.8,751.9 744.2,752.1 746.2,753.3 748.3,754.1 750.7,754.1 752.7,755.2 754.9,755.6 756.7,757.3 758.8,758.0 761.0,758.5 763.2,759.2 765.5,758.6 767.9,757.9 770.4,757.8 772.6,756.8 775.0,756.4 777.3,755.3 779.7,754.8 782.1,754.5 783.9,752.9 786.3,752.3 788.2,751.0 790.0,749.4 792.4,748.9 794.1,747.2 796.3,746.2 797.1,743.9 797.7,741.6 798.7,739.4 800.2,737.4 800.6,735.0 801.3,732.7 802.5,730.6 803.4,728.4 804.8,726.3 806.9,724.7 808.2,722.5 810.5,726.1 810.9,728.5 810.0,730.8 811.0,733.2 810.1,735.5 810.3,737.9 810.8,740.3 810.5,742.6 810.5,745.0 811.7,747.0 812.7,749.2 813.7,751.3 814.5,753.5 815.3,755.7 817.9,757.0 820.7,757.8 823.6,758.0 821.3,759.1 819.7,761.3 817.5,762.6 815.3,763.9 813.2,764.7 811.8,766.7 809.5,767.3 807.8,768.9 805.8,769.9 805.0,772.5 805.7,775.3 804.6,777.8 804.6,780.5"/>
<polyline points="823.6,758.0 826.3,757.1 829.0,756.1 831.8,755.7 831.7,753.2 833.1,751.0 833.3,748.6 833.4,746.1 834.2,743.8 836.6,743.5 839.0,743.8 841.3,742.8 843.7,742.9 846.1,742.6 848.6,743.1 850.9,744.1 853.0,745.6 855.5,746.2 857.9,745.6 860.1,744.3 862.6,743.8 865.0,743.5 867.4,743.7 869.7,744.5 872.1,744.6 874.5,744.6 876.9,745.0 879.4,745.4 881.6,746.6 883.9,747.4 886.2,748.2 888.7,748.6 891.1,747.9 893.3,746.7 895.8,746.2 898.0,744.8 900.6,744.5 902.8,743.2 905.3,742.6 907.6,741.4 907.5,738.6 908.7,736.0 908.8,733.2 911.1,732.1 913.7,731.8 916.1,730.9 918.3,729.6 919.5,732.0 921.2,734.1 921.9,736.7 924.2,737.6 926.6,737.6 928.9,738.5 931.4,738.4 933.7,739.1 935.2,741.3 936.1,743.8 934.3,745.3 933.3,747.4 932.0,749.4 930.2,750.9 930.9,753.0 931.3,755.3 932.5,757.3 932.5,759.6 933.2,761.7 933.7,763.9 935.5,765.7 937.6,767.2 938.9,769.4 940.6,771.3 942.3,773.1 944.4,774.6 945.0,776.8 944.9,779.1 945.7,781.3 945.7,783.6 946.8,785.7 946.3,788.1 946.6,790.3 947.5,792.5 947.9,794.7 946.3,797.1 944.7,799.4 943.2,801.8 942.9,804.2 943.2,806.6 941.9,808.9 942.4,811.3 942.2,813.7 942.0,816.1 941.6,818.5 940.7,820.8 940.8,823.2 940.7,825.7 940.0,828.0 938.8,830.2 938.4,832.6 939.7,834.9 940.8,837.2 941.2,839.8 942.2,842.2 943.2,844.5 944.7,846.9 946.1,849.4 947.9,851.6 950.0,852.8 951.2,855.0 953.1,856.5 955.4,857.5 957.1,859.1 958.6,861.0"/>
<polyline points="862.6,743.8 862.6,741.2 862.6,738.7 862.4,736.1 862.2,733.5 862.5,731.0 862.6,728.4 860.8,727.1 859.5,725.2 857.9,723.7 859.2,721.5 859.3,719.0 860.6,716.8 861.7,714.6 862.0,712.1 863.2,709.9 865.3,709.1 867.3,708.1 868.9,706.5 870.9,705.4 873.0,704.7 874.8,703.3 876.7,702.2 877.5,699.3 878.6,696.4 880.9,697.4 883.4,697.6 885.9,697.7 888.3,698.3 888.6,696.0 889.2,693.9 889.9,691.7 891.0,689.6 891.3,687.4 892.0,685.2 892.1,682.9 894.4,681.8 896.5,680.5 898.2,678.4 900.6,677.5 902.7,676.1"/>
<polyline points="694.9,545.4 694.9,547.7 695.3,549.9 696.5,551.9 696.7,554.2 697.9,556.2 698.7,558.4 700.1,560.4 701.0,562.6 702.6,564.4 703.3,566.7 704.3,568.8 705.4,570.9 706.1,573.3 706.2,575.8 705.4,578.3 705.8,580.8 706.3,583.2 704.7,585.3 703.8,587.8 702.8,590.2 702.6,592.5 702.6,594.7 702.8,597.0 703.8,599.2 703.3,601.5 703.8,603.7 703.7,606.0 704.5,608.4 706.0,610.6 706.7,613.0 707.3,615.5 708.7,617.7 709.8,620.0 712.3,620.2 714.6,620.9 717.1,621.3 719.5,621.8 718.5,624.1 718.6,626.7 718.1,629.2 717.2,631.5 716.8,634.0 715.0,635.8 712.7,636.8 710.4,638.0 708.7,639.9 706.8,641.5 704.6,642.8 704.1,645.1 703.4,647.5 703.2,649.9 702.7,652.2 702.1,654.6 701.1,656.8 701.9,659.4 702.3,662.1 703.0,664.7 703.3,667.4 705.5,668.6 707.7,669.9 709.4,671.7 711.3,673.4 713.5,674.7 715.6,676.0 717.2,677.9 718.7,679.8 720.7,681.3 722.0,683.5 723.8,685.1 725.4,687.0 727.7,686.1 729.9,685.2 732.1,684.1 734.4,683.2 736.7,683.0 739.1,682.9 741.4,682.9 743.7,683.2 746.1,683.1 748.4,683.2 750.1,684.7 752.2,685.7 753.8,687.4 755.1,689.3 757.3,690.2 758.9,691.9 761.6,691.3 764.2,690.6 766.8,689.7 769.5,689.3 771.7,690.4 774.2,690.2 776.4,691.3 778.9,691.3 781.3,691.8 783.5,692.8 785.7,692.0 787.5,690.5 789.3,689.0 791.4,688.2 793.5,687.1 795.6,686.3 797.5,684.9 800.3,685.1 802.9,685.9 805.3,687.3 808.1,687.5 810.2,688.3 812.5,688.1 814.7,688.8 816.8,689.5"/>
<polyline points="696.7,554.2 699.1,553.8 701.5,553.9 703.8,553.5 706.2,553.5 708.6,553.3 710.9,552.7 713.3,552.6 715.7,552.4 718.1,552.1 720.4,551.6 720.4,549.2 720.7,546.8 720.6,544.3 720.4,541.9 723.0,542.1 725.6,541.0 728.2,541.1 729.1,543.4 731.1,545.0 731.7,547.5 733.1,549.5 734.4,551.6 736.5,550.5 738.8,549.9 740.7,548.5 742.8,547.3 744.9,546.3 746.9,547.6 748.9,548.8 751.1,549.6 753.4,550.4 755.4,551.6 757.8,550.9 760.1,550.4 762.5,549.8 762.8,552.2 763.9,554.4 764.2,556.8 766.8,555.8 769.5,555.1 770.6,553.0 771.6,550.9 772.6,548.7 774.1,546.9 775.3,544.8 776.0,542.6 777.1,540.5 778.2,538.4 780.7,538.9 783.1,539.9 785.6,540.7 787.9,541.9 788.6,544.0 789.3,546.1 790.6,548.0 790.5,550.4 791.9,552.3 792.1,554.6 792.9,556.6 794.0,558.6 794.3,560.9 795.9,562.8 796.4,565.0 796.7,567.3 798.4,569.1 799.2,571.3 799.5,573.6 800.3,575.8 801.1,577.9 803.1,579.2 805.3,579.9 807.6,580.6 809.8,581.4 811.2,583.2 813.3,584.2 815.1,585.6 816.7,587.2 818.6,588.4 816.9,590.2 815.2,592.0 813.3,593.6 811.7,595.5 809.5,596.8 808.1,598.9 806.3,600.0 807.4,604.2 809.7,604.4 812.0,604.2 814.3,603.8 816.6,604.1 818.9,604.2 820.9,605.7 822.7,607.4 824.6,609.0 826.4,610.9 828.2,612.5 830.5,613.7 830.5,616.2 830.6,618.6 830.5,621.1 827.7,621.7 824.8,622.0 822.1,623.2 821.4,621.1 821.1,618.9 818.6,618.2 816.3,617.2 813.7,616.8 813.5,619.5 812.6,622.1 810.2,622.3 807.7,621.6 805.3,622.1 804.6,619.8 803.2,617.9 802.1,615.8 801.2,617.9 799.2,619.4 798.1,621.4 796.8,623.2 795.8,625.3 794.6,623.3 792.6,622.1 790.2,621.7 787.9,622.2 785.6,622.5 783.2,622.1 780.9,623.1 778.4,623.7 776.1,624.5 773.7,625.3 773.7,629.5 770.5,629.8 767.4,629.5 765.4,630.9 763.1,631.5 761.0,632.5 758.9,633.7 759.8,635.7 759.9,638.1 761.1,640.0 759.5,641.7 758.5,643.9 756.6,645.5 754.8,647.0 753.7,649.1 751.9,650.7 750.5,652.6 748.9,650.2 748.4,647.4 746.4,649.3 744.0,650.6 742.1,652.6 742.0,655.4 741.9,658.3 742.1,661.1 741.1,663.4 739.5,665.3 738.1,667.4 736.8,669.5 738.1,671.5 738.8,673.8 740.0,675.8 741.1,677.9 739.5,680.3 738.9,683.2"/>
<polyline points="773.7,629.5 776.0,629.4 778.2,629.1 780.4,628.6 782.7,628.5 785.0,629.0 787.2,628.1 789.5,628.4 790.5,631.6 789.9,634.2 788.7,636.5 787.3,638.7 786.3,641.1 788.6,642.0 791.0,642.3 793.4,643.0 795.8,643.2 796.6,645.6 797.0,648.0 796.8,650.5 795.9,652.5 795.7,654.8 794.7,656.8 794.5,659.0 793.7,661.1 793.8,663.7 793.5,666.2 793.5,668.7 792.4,671.1 792.6,673.7 794.0,675.4 795.7,677.0 797.1,678.7 798.6,680.3 800.0,682.1 802.4,683.3 803.9,685.6 806.2,686.9 808.4,688.4"/>
<polyline points="802.1,658.9 802.7,661.3 804.2,663.2 803.2,667.4 803.8,669.7 804.1,672.1 805.0,674.4 805.3,676.8 807.2,678.4 807.8,680.9 809.4,682.7 811.3,684.3 812.6,686.3"/>
<polyline points="804.2,661.1 807.4,661.0 810.5,660.0 811.2,662.3 812.6,664.2 815.4,663.8 818.3,664.0 821.1,663.7"/>
<polyline points="843.2,624.2 841.2,626.6 840.0,629.5 839.5,631.9 838.5,634.1 838.7,636.6 837.9,638.9 835.9,640.1 833.6,640.8 831.7,642.4 829.6,643.4 827.2,643.9 825.3,645.3 823.5,647.0 821.5,648.5 820.0,650.5 822.1,652.6 822.2,654.8 822.1,657.1 821.7,659.3 821.6,661.5 821.1,663.7 824.2,664.5 827.4,664.2 829.5,666.3 828.9,668.7 827.8,670.9 827.4,673.4 826.1,675.6 825.3,677.9 825.7,680.3 825.9,682.6 826.5,685.0 826.3,687.4 824.0,688.3 821.5,688.1 819.2,689.1 816.8,689.5 817.1,691.7 817.1,693.9 817.0,696.1 817.1,698.3 817.3,700.5 816.6,702.8 817.0,705.0 817.2,707.2 816.6,709.4 816.8,711.6 814.0,712.0 811.2,711.9 808.4,711.6 808.3,714.4 809.4,717.0 809.3,719.8 809.5,722.5 810.5,726.1"/>
<polyline points="843.2,624.2 845.7,625.1 848.4,625.3 848.1,627.6 848.8,630.0 848.6,632.4 848.4,634.7 850.7,635.3 853.2,635.4 855.4,636.4 858.0,636.0 860.2,637.2 862.6,637.1 865.1,637.2 867.4,637.9 868.2,640.4 869.2,642.7 869.5,645.3 871.9,644.4 874.0,642.9 876.6,642.5 878.8,641.1 881.1,640.0 883.5,639.5 885.9,639.0 888.4,638.9 889.9,640.6 891.8,641.9 892.8,644.0 894.7,645.3 896.1,647.2 896.8,649.5 897.8,651.6 898.9,653.7 901.0,652.3 903.4,651.5 905.4,649.9 907.8,649.0 909.9,647.7 912.0,646.2 914.3,645.2"/>
<polyline points="927.8,571.9 926.7,574.1 925.9,576.4 924.6,578.4 922.8,580.2 922.0,582.5 921.7,584.8 920.9,587.0 921.0,589.3 920.1,591.5 919.8,593.8 919.2,596.0 917.8,597.9 916.6,600.0 915.4,602.1 913.8,603.8 912.5,605.8 911.2,607.8 909.5,609.5 907.8,612.3 906.6,615.3 908.2,617.1 909.6,619.1 910.6,621.4 912.2,623.2 913.5,625.2 915.3,626.9 916.4,628.8 918.5,630.0 919.8,631.8 921.1,633.6 921.1,636.3 920.0,638.9 919.5,641.5 919.2,644.2 919.2,646.5 918.9,648.8 918.4,651.1 918.2,653.5 918.2,655.8 916.5,657.3 914.3,658.1 912.8,659.8 910.8,660.8 909.3,662.5 907.5,663.9 905.2,664.5 903.5,665.9 901.8,667.4 901.9,670.3 902.9,673.1 902.7,676.1 905.0,676.6 907.1,677.7 909.3,678.7 911.3,679.7 913.4,680.9 915.7,680.2 918.0,679.3 920.4,679.1 922.8,678.9 925.0,677.8 927.5,678.0 929.8,677.1 931.0,675.1 932.4,673.1 933.1,670.8 934.4,668.9 935.9,667.0 936.7,664.8 937.6,662.5 939.5,660.9 940.4,658.7 942.4,660.4 944.9,661.4 947.2,662.6 949.1,664.5 951.5,663.1 953.5,661.2 955.3,659.1 957.8,657.8 959.6,656.4 961.4,655.2 963.7,654.7 965.4,653.1 967.7,652.6 969.5,651.4 971.3,650.0 972.9,647.7 975.3,646.3 977.1,644.2 976.8,641.9 977.0,639.6 976.9,637.4 976.1,635.1 975.7,632.9 976.5,630.5 975.7,628.3 976.1,626.0 975.7,623.7 975.5,621.5 975.1,619.2 973.4,617.2 971.3,615.7 969.3,614.1 967.4,612.4 965.0,612.7 962.8,611.8 960.4,611.9 958.1,611.6 955.8,611.4 957.9,609.8 959.0,607.3 961.2,605.8 962.4,603.4 964.5,601.8 964.6,599.4 964.6,597.1 963.9,594.8 964.0,592.4 964.4,590.1 963.9,587.7 963.6,585.4 961.3,585.3 958.9,585.5 956.6,585.6 954.3,585.2 952.0,585.0 949.7,585.1 947.4,584.9 945.0,585.0 942.7,584.3 940.4,584.4 939.0,582.7 937.0,581.5 935.5,579.9 934.1,578.1 932.5,576.6 931.3,574.7 929.3,573.6 927.8,571.9"/>
<polyline points="902.7,676.1 900.7,677.6 898.2,678.5 896.6,680.5 894.2,681.5 892.1,682.9"/>
<polyline points="977.1,644.2 978.2,646.6 979.0,649.1 981.2,649.6 983.5,649.5 985.7,649.8 988.0,649.3 990.2,650.0 992.5,650.0 994.7,650.6 996.9,650.9 999.0,651.7 1001.1,652.3 1003.5,652.0 1005.6,652.7 1007.8,653.3 1009.9,653.9 1012.0,655.3 1014.1,656.7 1015.7,658.7 1016.9,656.4 1018.3,654.2 1020.2,652.3 1021.5,650.0 1022.2,647.7 1022.6,645.3 1023.6,643.0 1024.5,640.8 1025.3,638.5 1026.8,636.8 1028.3,635.0 1029.8,633.3 1031.4,631.7 1033.8,630.8 1035.0,628.8 1034.1,626.7 1032.4,625.2 1031.8,622.9 1031.0,620.8 1029.4,619.1 1027.9,617.4 1027.1,615.3 1025.9,613.4 1024.6,611.6 1023.8,609.4 1022.2,607.8 1021.5,605.6"/>
<polyline points="809.8,553.3 811.6,554.9 813.8,555.8 815.9,557.0 817.8,558.4 820.0,559.4 822.1,560.4 824.4,559.5 826.7,558.9 829.0,558.2 831.3,557.5 833.8,557.7 836.1,556.8 838.3,558.0 840.9,558.4 843.3,559.1 845.4,560.5 847.7,561.6 850.2,562.1 850.6,564.5 852.3,566.4 852.5,568.8 853.7,570.9 855.6,572.1 857.7,572.9 859.9,573.3 862.0,574.0 863.8,575.6 866.0,576.1 865.5,578.3 864.7,580.4 863.8,582.4 863.3,584.6 862.5,586.7 860.5,587.8 859.2,589.7 857.5,591.3 855.4,592.2 853.7,593.7 851.2,594.3 848.7,594.8 846.3,595.6 843.7,596.1 841.4,597.2 839.3,595.8 836.9,595.2 834.6,594.2 832.2,593.5 830.0,592.4 827.9,591.1 825.6,590.2 823.9,586.7 821.8,587.6 819.5,587.3 817.4,588.3 815.1,588.4"/>
<polyline points="865.1,574.7 865.0,572.1 865.6,569.6 865.1,567.0 867.0,565.6 869.1,564.6 871.4,564.1 873.4,562.9 875.8,562.4 877.6,560.7 880.1,560.6 882.2,559.7 884.3,558.6 886.3,557.4 886.2,554.8 886.1,552.3 886.3,549.7 888.6,549.7 890.8,549.4 893.0,549.1 895.3,548.9 897.5,548.8 899.8,548.7 902.1,548.3 904.3,547.9 906.6,547.5 908.6,546.1 910.8,545.7 913.1,545.3 915.3,544.8 916.3,542.4 917.2,540.0"/>
<polyline points="886.3,553.5 887.7,555.3 889.2,557.2 890.2,559.3 893.2,559.8 896.0,561.2 898.3,560.8 900.6,560.8 902.9,561.2 905.2,561.0 907.4,560.7 909.7,560.7 912.0,560.5 914.3,559.9 916.6,560.0 918.8,559.0 921.1,559.3 920.4,561.7 920.0,564.1 919.9,566.6 919.2,569.0 921.3,569.8 923.3,570.9 925.7,571.2 927.8,571.9"/>
<polyline points="811.6,455.7 810.1,457.7 809.0,460.0 807.5,462.1 805.6,463.9 804.6,466.2 804.2,468.5 803.2,470.6 801.8,472.5 801.1,474.7 800.2,476.8 801.0,478.9 800.7,481.2 801.3,483.3 801.4,485.6 801.9,487.7 802.1,489.9 802.4,492.1 802.8,494.3 802.5,496.9 802.4,499.6 801.9,502.2 801.1,504.8 802.5,506.9 804.6,508.3 805.4,510.5 806.7,512.5 806.9,515.0 808.4,517.0 809.4,519.1 809.8,521.5 811.0,523.6 811.6,525.9 813.9,525.7 816.3,525.6 818.6,525.3 817.1,527.3 815.0,528.7 813.6,530.8 811.6,532.3 809.7,533.9 808.4,536.1 806.3,537.5 806.9,539.7 807.8,541.9 807.9,544.3 807.9,546.6 808.7,548.8 809.1,551.1 809.8,553.3 809.0,555.6 809.1,558.1 808.1,560.4 807.9,562.7 808.4,564.8 809.4,566.9 808.9,569.2 809.7,571.3 810.2,573.5 809.6,575.8 810.4,577.9 810.4,580.2 811.4,582.3 811.0,584.5 811.6,586.7 815.1,588.4"/>
<polyline points="908.1,494.3 909.9,492.7 912.0,491.7 914.2,490.7 916.0,489.2 918.4,488.6 920.2,487.0 922.3,485.9 924.5,485.2 926.4,483.7 928.7,483.0 930.6,481.6 932.6,480.3 934.8,480.4 937.0,479.8 939.2,479.9 941.4,479.5 943.5,478.5 945.8,478.8 947.9,478.1 950.2,478.3 952.4,477.9 954.6,477.7 956.7,476.7 958.9,476.8 961.3,477.1 963.7,477.9 966.0,478.6 968.5,478.8 971.1,478.5 973.4,479.5 975.9,479.4 978.2,480.3 979.1,478.1 980.3,476.0 980.5,473.5 981.8,471.5 984.0,471.0 985.9,469.9 987.8,468.6 989.8,467.7 991.9,467.0 994.0,466.2 994.7,468.5 996.0,470.5 997.6,472.4 998.7,474.4 999.3,476.8 1001.9,478.2 1003.8,480.5 1006.3,482.0 1007.8,480.1 1009.7,478.7 1011.2,476.9 1013.2,475.5 1014.7,473.6 1016.2,471.8 1018.5,470.7 1019.9,468.8 1021.7,467.2 1023.5,465.7 1025.3,464.1 1026.7,462.1"/>
<polyline points="965.3,516.5 966.1,514.0 967.8,512.0 968.9,509.7 970.5,507.7 973.2,506.0 975.8,506.0 978.4,506.4 981.1,506.3 983.7,505.5 986.3,506.0 988.4,505.2 990.8,505.5 992.9,504.9 995.1,504.1 997.3,503.8 999.4,503.0 1001.8,503.3 1003.9,502.5 1005.6,501.0 1007.6,500.0 1009.2,498.3 1010.6,496.5 1012.6,495.4 1016.1,493.7 1018.4,492.9 1020.7,492.2 1023.3,492.4 1025.5,491.5 1027.7,490.3 1030.2,490.2 1032.6,488.1 1035.4,486.7 1037.9,486.7 1040.3,487.0 1042.8,487.3 1045.2,487.2 1047.7,487.5 1049.3,489.5 1051.1,491.3 1052.1,493.7 1050.1,495.0 1048.4,496.6 1046.7,498.3 1044.4,499.3 1042.5,500.7 1040.0,501.6 1038.4,503.8 1036.1,505.0 1033.7,506.0 1031.3,507.6 1029.2,509.7 1026.7,511.2 1026.8,513.6 1026.4,515.9 1026.5,518.3 1026.0,520.6 1025.9,522.9 1025.8,525.3 1024.9,527.5 1024.4,529.9 1025.0,532.4 1024.0,534.6 1023.3,536.9 1023.2,539.3 1021.2,540.8 1019.5,542.6 1017.8,544.5 1016.1,546.2 1014.4,548.1 1012.2,549.3 1009.9,550.4 1007.4,550.9 1005.1,551.9 1003.0,553.3 1001.0,552.0 998.7,551.4 996.3,550.9 994.2,549.8 992.1,548.7 989.9,547.8 987.6,547.2 985.5,546.2 983.1,545.6 981.0,544.6 978.8,544.0 976.6,543.5 974.3,543.3 972.2,542.4 970.0,541.9 967.9,541.1 968.8,538.7 968.6,536.2 968.8,533.7 969.0,531.2 969.6,528.8 970.7,526.0 972.3,523.5 970.4,521.9 968.5,520.3 966.7,518.6 965.3,516.5"/>
<polyline points="997.7,510.4 999.9,511.3 1002.3,511.4 1004.6,511.9 1006.8,512.6 1009.1,513.0 1011.3,514.0 1013.4,515.0 1015.5,516.1 1017.4,517.5 1019.5,518.7 1021.4,520.0 1023.6,520.7 1025.8,520.9"/>
<polyline points="997.7,510.4 996.8,513.0 995.5,515.4 995.1,518.2 993.7,520.5 991.7,522.3 990.4,524.7 989.0,527.0 989.6,529.4 989.7,531.9 989.4,534.4 989.1,536.9 989.8,539.3 991.0,541.3 991.7,543.6 993.1,545.6 993.7,547.9 995.1,549.8"/>
<polyline points="848.9,425.8 851.3,424.2 852.9,421.5 855.2,419.5 857.6,419.9 860.0,420.3 861.6,422.6 861.9,425.1 863.2,427.2 863.7,429.6 865.7,431.1 867.7,432.5 869.2,434.6 871.7,434.4 874.2,434.7 876.6,435.2 879.2,433.8 881.5,432.1 885.2,430.3 885.8,427.5 886.4,424.2"/>
<polyline points="885.8,427.5 888.2,427.8 888.9,430.9 891.2,431.8 893.1,433.3 893.1,436.4 890.7,439.5 889.9,442.6 888.9,445.6 885.8,446.2 885.2,443.8 882.4,443.1 879.9,441.6 877.2,440.7 875.3,444.4 875.9,446.7 877.2,448.7 879.8,449.6 882.5,449.9 884.9,451.2 887.6,451.7 888.9,454.8 891.4,456.1 894.1,456.6 896.8,457.3 893.1,459.1 894.4,461.2 894.4,463.8 895.6,465.9 898.0,466.8 900.5,466.6 903.0,466.9 905.4,467.7 906.7,471.4 906.8,474.3 906.2,477.1 906.0,480.0 905.9,482.3 906.4,484.5 906.3,486.7 907.4,488.9 907.5,491.1 907.3,493.4 907.7,495.6 908.1,497.8 909.6,499.5 910.8,501.4 912.6,502.9 914.3,504.5 915.4,506.5 916.8,508.3 917.9,510.4 918.0,512.7 919.0,514.8 919.5,517.1 920.0,519.3 921.0,521.4 921.5,523.7 922.1,525.9 921.5,528.2 919.6,529.9 918.9,532.2 917.4,534.1 916.8,536.4 916.1,539.0 914.4,541.0 913.3,543.4"/>
<polyline points="885.8,424.4 888.3,424.2 890.7,423.5 892.9,424.6 895.0,426.0 896.8,429.6 898.1,431.5 900.1,430.5 902.4,430.3"/>
<polyline points="834.0,445.5 835.2,447.7 836.0,450.1 836.5,452.6 837.2,455.3 838.9,457.7 839.5,460.5 840.6,458.6 841.0,456.4 841.9,454.3 842.7,452.3 843.4,450.2 844.8,448.1 846.2,446.1 847.4,443.9"/>
<polyline points="595.3,494.0 597.0,495.8 598.9,497.2 600.4,499.2 602.5,500.5 603.9,502.5 605.6,504.2 607.3,505.9 609.4,507.2 610.8,509.2 612.8,510.7 615.5,509.4 617.4,507.1 619.8,505.4 622.1,505.7 624.3,506.4 626.5,507.4 628.9,507.0 631.2,507.4 633.3,508.4 635.6,508.9 636.5,511.1 637.5,513.2 639.0,515.1 639.5,517.5 641.4,519.2 642.0,521.6 643.7,523.3 644.4,525.6 643.0,527.9 641.2,529.8 639.5,531.8 637.4,533.5 635.5,534.9 633.5,536.3 631.9,538.1 629.4,538.9 627.9,540.8 626.1,542.4 624.2,543.8 621.9,544.8 619.9,546.1 618.4,548.2 616.3,549.3 614.6,550.9 612.3,551.4 610.6,553.0 608.2,553.5 606.6,555.1 604.6,556.2 602.8,557.6 600.6,558.3 598.8,559.8 600.1,561.8 601.5,563.7 602.2,566.1 604.1,567.6 604.8,570.0 606.7,571.6 607.5,573.9 609.8,573.0 612.0,571.8 614.4,571.2 616.3,569.4 618.8,568.9 621.0,567.7 623.3,566.8 624.8,568.5 626.6,569.8 628.5,570.9 630.4,572.1 628.8,573.9 627.1,575.4 625.3,576.9 623.4,578.3 621.8,580.0 620.0,581.6 617.9,582.6 616.3,584.4 614.2,585.0 612.2,586.0 609.8,586.0 608.0,587.5 605.8,587.9 607.5,589.5 609.5,590.7 610.8,592.8 612.5,594.4 614.7,595.4 616.1,597.3 617.8,598.9 619.8,600.2 620.5,597.9 621.4,595.7 622.4,593.6 623.3,591.4 625.0,589.7 625.7,587.3 627.6,585.7 628.9,583.7 630.1,581.6 631.6,579.8 633.2,578.0 634.0,575.7 635.6,573.9 637.9,575.0 640.6,575.2 642.9,576.3 645.3,577.1 647.9,577.4 650.2,577.1 652.4,577.8 654.7,577.9 656.9,577.2 659.2,576.9 661.4,577.0 663.7,577.4 664.6,574.8 664.0,572.0 665.4,569.5 665.4,566.8 663.7,564.9 662.8,562.5 660.8,560.7 659.5,558.6 658.4,556.3 657.0,554.4 655.0,553.1 653.7,551.2 652.6,549.0 650.9,547.4 649.5,545.5 648.0,543.7 646.1,542.3 648.3,541.2 650.7,540.8 653.2,540.8 655.5,540.1 657.7,538.9 660.2,538.8 662.4,537.9 664.8,537.5 667.2,537.0 669.2,538.1 670.9,539.5 671.8,541.8 674.0,542.7 675.3,544.6 677.2,545.8 679.6,545.3 682.1,545.5 684.6,545.0 687.0,545.2 689.5,544.8 692.0,545.2 694.4,544.9"/>
<polyline points="672.5,464.2 674.5,465.4 675.8,467.3 677.7,468.6 679.8,469.7 681.3,471.4 683.0,473.0 684.4,474.8 686.6,475.8 688.2,477.4 689.7,475.4 692.1,474.2 693.8,472.4 695.4,470.5 696.9,468.4 698.8,466.8 700.9,467.9 702.8,469.4 704.9,470.6 706.8,472.0 708.4,473.9 710.4,475.2 712.3,476.7 714.3,478.0 716.5,479.1 718.1,480.9 718.5,483.3 719.1,485.6 719.8,487.9 720.8,490.0 721.9,492.1 722.8,494.3 723.6,496.5 725.1,498.4 722.8,498.8 720.7,499.7 718.7,500.8 716.6,501.7 714.4,502.4 712.1,502.6 710.1,504.0 708.0,504.7 705.8,505.4 705.0,508.1 704.0,510.7 702.5,512.4 700.2,513.0 699.1,515.2 696.9,516.1 694.9,517.2 693.6,519.1 691.6,520.2 690.0,521.7 688.2,523.0 685.9,522.4 683.7,521.6 681.5,520.8 679.5,519.5 677.2,518.5 674.9,518.0 672.6,517.3 670.0,517.6 667.8,516.3 665.4,516.2 663.1,515.2 660.8,514.7 658.4,514.2 657.9,511.9 658.3,509.5 657.0,507.3 657.5,504.8 657.4,502.5 656.7,500.2 659.0,499.6 661.4,499.1 663.7,498.4 665.2,496.6 665.4,494.3 666.8,492.5 667.9,490.5 668.6,488.3 669.9,486.5 670.7,484.4 668.7,483.1 666.9,481.6 665.0,480.1 663.1,478.6 661.1,477.4 658.7,478.5 656.2,479.0 653.8,480.0 651.4,480.9 652.1,483.2 652.1,485.6 653.0,487.9 652.7,490.3 653.6,492.6 654.0,494.9 651.6,494.9 649.2,495.3 646.8,495.6 644.4,495.8 645.2,497.9 645.3,500.2 642.7,501.2 639.9,500.9 637.4,501.9 636.5,505.0 635.6,508.1"/>
<polyline points="725.1,498.4 726.6,500.2 728.1,501.9 729.3,503.9 731.3,505.2 732.9,507.0 733.8,509.2 735.6,510.7 734.9,512.8 734.1,514.9 733.2,516.9 732.4,519.0 732.1,521.2 729.9,522.1 728.4,524.1 726.2,525.1 723.9,525.9 721.9,527.2 720.3,529.1 718.1,530.0 715.5,528.5 713.3,526.7 711.1,524.7 709.6,526.8 707.7,528.4 705.5,529.8 704.0,531.8 702.7,533.8 701.6,535.8 700.7,538.0 699.1,539.9 697.3,541.5 696.4,543.7 695.3,545.8"/>
<polyline points="822.1,623.2 824.6,625.1 827.0,627.0 829.7,627.1 832.3,627.7 835.0,627.5 837.2,626.9 839.0,625.5 841.2,625.2 843.2,624.2"/>
<polyline points="1016.3,476.0 1020.0,475.5 1021.4,477.4 1022.6,479.5 1019.0,480.5 1017.7,478.2 1016.3,476.0"/>
<polyline points="641.6,453.7 641.3,456.4 640.5,458.9 641.2,461.0 641.6,463.2 643.3,464.9 644.8,466.8 646.7,468.3 647.9,470.5 649.4,468.2 651.5,466.3 653.2,464.2 653.8,461.4 655.3,458.9 658.4,458.9"/>
<polyline points="531.2,626.0 534.2,626.4 537.0,627.5 539.1,628.4 541.4,628.6 543.5,629.5"/>
<circle cx="612.5" cy="500" r="6" />
</g>
<circle cx="837.3" cy="486.4" r="4.2" fill="#e8722f" stroke="#222" stroke-width="0.8"/>
<circle cx="354" cy="841" r="4.2" fill="#e8722f" stroke="#222" stroke-width="0.8"/>
<circle cx="909" cy="908.3" r="4.2" fill="#e8722f" stroke="#222" stroke-width="0.8"/>
<g font-family="Liberation Sans" font-weight="bold" font-size="12" fill="#111">
<text x="845.3" y="490.6" textLength="119" lengthAdjust="spacingAndGlyphs">ZRH (Zurich Airport)</text>
<text x="362.6" y="838" textLength="128.4" lengthAdjust="spacingAndGlyphs">GVA (Geneva Cointrin</text>
<text x="362.6" y="853.9" textLength="125.7" lengthAdjust="spacingAndGlyphs">International Airport)</text>
<text x="917.9" y="912.7" textLength="123.6" lengthAdjust="spacingAndGlyphs">LUG (Lugano Airport)</text>
</g></svg><!--/MAP-->

<!-- scrollbar -->
<div class="a" style="left:1461px;top:223px;width:20px;height:773px;background:#f3f3f3;border-radius:10px"></div>
<svg class="ico" style="left:1465px;top:227px" width="12" height="10" viewBox="0 0 12 10"><path d="M6 1.5L10.5 8.5H1.5z" fill="#6b6b6b" stroke="#6b6b6b" stroke-linejoin="round" stroke-width="1.5"/></svg>
<svg class="ico" style="left:1465px;top:981px" width="12" height="10" viewBox="0 0 12 10"><path d="M6 8.5L10.5 1.5H1.5z" fill="#6b6b6b" stroke="#6b6b6b" stroke-linejoin="round" stroke-width="1.5"/></svg>
<div class="a" style="left:1466px;top:895px;width:10px;height:41px;background:#6e6e6e;border-radius:5px"></div>
<svg class="ico" style="left:1463px;top:997px" width="16" height="40" viewBox="0 0 16 40" fill="#6b6b6b" stroke="#6b6b6b" stroke-width="1.6" stroke-linejoin="round"><path d="M8 2.5l5 5.5H3z"/><path d="M8 8.5l5 6H3z"/><path d="M3 23.5h10L8 29.5z"/><path d="M3 30h10L8 37z"/></svg>
<div class="a" style="left:1482px;top:226px;width:1px;height:886px;background:#d2d2d2"></div>

<!-- NOTES -->
<div class="a" style="left:53px;top:1063px;width:1429px;height:1px;background:#cfcfcf"></div>



<!-- PANE -->
<div class="a" style="left:1483px;top:223px;width:437px;height:890px;background:#f0f0f0"></div>
<svg class="ico" style="left:1841px;top:242px" width="20" height="14" viewBox="0 0 20 14" fill="none" stroke="#242424" stroke-width="1.4"><path d="M2 3l8 8 8-8"/></svg>
<svg class="ico" style="left:1883px;top:241px" width="16" height="16" viewBox="0 0 16 16" fill="none" stroke="#242424" stroke-width="1.4"><path d="M1.5 1.5l13 13M14.5 1.5l-13 13"/></svg>
<div class="a" style="left:1490px;top:265px;width:422px;height:841px;background:#fff"></div>
<style>
.box{position:absolute;left:1501px;width:396px;border:1px solid #646464;background:#fff}
.hd{position:absolute;left:1516px;font-size:14px;font-weight:bold;color:#000080;white-space:nowrap;line-height:1}
.btn{position:absolute;border:1px solid #cfcfcf;border-radius:3px;background:#fff}
.btn>div{position:absolute;left:2px;top:2px;right:2px;bottom:2px;font-size:13px;color:#2a2a2a;text-align:center;white-space:nowrap}
.lb{position:absolute;left:1513px;width:364px;border:1px solid #828790;background:#fff}
.item{position:absolute;left:1517px;font-size:13px;color:#000;white-space:nowrap;line-height:1}
</style>
<div class="box" style="top:275px;height:119px"></div>
<div class="a" style="left:1513px;top:315px;width:364px;height:24px;border:1px solid #d2d2d2;border-radius:2px;background:#fcfcfc"></div>
<svg class="ico" style="left:1859px;top:323px" width="14" height="9" viewBox="0 0 14 9" fill="none" stroke="#444" stroke-width="1.1"><path d="M2 2l5 5 5-5"/></svg>
<div class="btn" style="left:1514px;top:352px;width:131px;height:29px"><div style="background:#add8e6;line-height:23px"></div></div>

<div class="box" style="top:402px;height:175px"></div>
<div class="lb" style="top:442px;height:84px"></div>
<div class="a" style="left:1515px;top:444px;width:360px;height:16px;background:#0078d7"></div>
<div class="btn" style="left:1514px;top:537px;width:104px;height:29px"><div style="background:#f08080;line-height:23px"></div></div>

<div class="box" style="top:585px;height:144px"></div>
<div class="a" style="left:1513px;top:652px;width:364px;height:24px;border:1px solid #7a7a7a;border-radius:2px;background:#fff"></div>
<svg class="ico" style="left:1859px;top:660px" width="14" height="9" viewBox="0 0 14 9" fill="none" stroke="#444" stroke-width="1.1"><path d="M2 2l5 5 5-5"/></svg>
<div class="btn" style="left:1514px;top:688px;width:131px;height:29px"><div style="background:#add8e6;line-height:23px"></div></div>

<div class="box" style="top:737px;height:219px"></div>
<div class="lb" style="top:777px;height:132px"></div>
<div class="a" style="left:1515px;top:811px;width:360px;height:16px;background:#0078d7"></div>
<div class="btn" style="left:1514px;top:917px;width:104px;height:29px"><div style="background:#f08080;line-height:23px"></div></div>

<div class="box" style="top:964px;height:120px;background:#f4f4f4"></div>
<div class="btn" style="left:1514px;top:976px;width:105px;height:29px;background:#fbfbfb"><div style="line-height:23px"></div></div>
<div class="btn" style="left:1643px;top:976px;width:105px;height:29px;background:#fbfbfb"><div style="line-height:23px"></div></div>
<div class="btn" style="left:1771px;top:976px;width:105px;height:29px;background:#fbfbfb"><div style="line-height:23px"></div></div>
<div class="btn" style="left:1624px;top:1017px;width:145px;height:29px"><div style="background:#90ee90;line-height:23px;font-weight:bold;font-size:14px;color:#1e1e1e"></div></div>

<!-- STATUS BAR -->
<div class="a" style="left:0;top:1113px;width:1920px;height:27px;background:#f3f3f3"></div>
<svg class="ico" style="left:119px;top:1118px" width="20" height="18" viewBox="0 0 20 18" fill="none" stroke="#424242" stroke-width="1.2"><path d="M7 15.5H1.5v-14h11v6"/><path d="M5 1.5v14"/><path d="M10 10l6 6M16 10l-6 6"/></svg>
<svg class="ico" style="left:328px;top:1117px" width="20" height="20" viewBox="0 0 20 20" fill="none" stroke="#424242" stroke-width="1.2"><circle cx="9" cy="3" r="1.6"/><path d="M2 6.5l7 1 7-1M9 7.5v5l-3 6M9 12.5l2 3"/><path d="M12 13l5 5M17 13l-5 5"/></svg>
<svg class="ico" style="left:1249px;top:1116px" width="20" height="20" viewBox="0 0 20 20" fill="none" stroke="#424242" stroke-width="1.2"><path d="M7 5l3-3 3 3"/><path d="M1 9.5h18M1 13.5h18M1 17.5h18"/></svg>
<svg class="ico" style="left:1328px;top:1117px" width="20" height="19" viewBox="0 0 20 19" fill="none" stroke="#424242" stroke-width="1.2"><path d="M9 12.5H1.5v-11h15v6"/><path d="M6 16.5h4"/><circle cx="14" cy="14" r="2.3"/><path d="M14 10v1.3M14 16.7V18M10 14h1.3M16.7 14H18"/></svg>
<div class="a" style="left:1467px;top:1114px;width:50px;height:26px;background:#dedede"></div>
<svg class="ico" style="left:1481px;top:1118px" width="20" height="17" viewBox="0 0 20 17" fill="none" stroke="#363636" stroke-width="1.5"><rect x="1" y="1" width="18" height="15"/><path d="M5 1v15M5 12h14"/><rect x="9" y="5" width="5" height="3"/></svg>
<svg class="ico" style="left:1532px;top:1118px" width="20" height="18" viewBox="0 0 20 18" fill="none" stroke="#424242" stroke-width="1.4"><rect x="1.5" y="1.5" width="7" height="6"/><rect x="11.5" y="1.5" width="7" height="6"/><rect x="1.5" y="10.5" width="7" height="6"/><rect x="11.5" y="10.5" width="7" height="6"/></svg>
<svg class="ico" style="left:1582px;top:1117px" width="20" height="19" viewBox="0 0 20 19" fill="none" stroke="#424242" stroke-width="1.3"><path d="M1.5 2.5h7l1.5 1.5 1.5-1.5h7v14h-7l-1.5 1-1.5-1h-7z"/><path d="M10 4v13M4 6h4M4 9h4M4 12h4M12 6h4M12 9h4M12 12h4"/></svg>
<svg class="ico" style="left:1632px;top:1117px" width="20" height="19" viewBox="0 0 20 19" fill="none" stroke="#424242" stroke-width="1.4"><rect x="2" y="1.5" width="16" height="9"/><path d="M10 10.5v7M6 17.5h8M5 4h10"/></svg>
<div class="a" style="left:1674px;top:1126px;width:10px;height:1px;background:#424242"></div>
<div class="a" style="left:1691px;top:1126px;width:124px;height:1px;background:#5a5a5a"></div>
<div class="a" style="left:1737px;top:1119px;width:6px;height:15px;background:#5f5f5f;border-radius:1px"></div>
<div class="a" style="left:1752px;top:1122px;width:1px;height:9px;background:#5a5a5a"></div>
<div class="a" style="left:1820px;top:1126px;width:11px;height:1px;background:#424242"></div>
<div class="a" style="left:1825px;top:1121px;width:1px;height:11px;background:#424242"></div>
<svg class="ico" style="left:1894px;top:1115px" width="22" height="22" viewBox="0 0 22 22" fill="none" stroke="#424242" stroke-width="1.3"><rect x="7" y="7" width="8" height="8"/><path d="M9 3.5l2-2 2 2M9 18.5l2 2 2-2M3.5 9l-2 2 2 2M18.5 9l2 2-2 2"/></svg>

<!--TEXTS--><svg class="a" style="left:0;top:0;pointer-events:none" width="1920" height="1140" viewBox="0 0 1920 1140" font-family="Liberation Sans">
<text x="61" y="35.3" font-size="12.5" fill="#242424" textLength="53.4" lengthAdjust="spacingAndGlyphs">AutoSave</text>
<text x="153.8" y="35.3" font-size="12.5" fill="#242424" textLength="16.9" lengthAdjust="spacingAndGlyphs">Off</text>
<text x="719.4" y="36.1" font-size="14.8" fill="#242424" textLength="186.2" lengthAdjust="spacingAndGlyphs">20260202 - airports close t...</text>
<text x="917.5" y="36.1" font-size="14.8" fill="#242424">•</text>
<text x="930.6" y="36.1" font-size="14.8" fill="#242424" textLength="105.8" lengthAdjust="spacingAndGlyphs">Saved to this PC</text>
<text x="1147.5" y="34.6" font-size="16.5" fill="#616161" textLength="49.5" lengthAdjust="spacingAndGlyphs">Search</text>
<text x="26.6" y="86" font-size="16.9" fill="#242424" textLength="23.7" lengthAdjust="spacingAndGlyphs">File</text>
<text x="84" y="86" font-size="16.9" fill="#242424" textLength="70.0" lengthAdjust="spacingAndGlyphs">think-cell</text>
<text x="179" y="86" font-size="16.9" fill="#242424" textLength="46.0" lengthAdjust="spacingAndGlyphs">Home</text>
<text x="249" y="86" font-size="16.9" fill="#242424" textLength="42.0" lengthAdjust="spacingAndGlyphs">Insert</text>
<text x="317" y="86" font-size="16.9" fill="#242424" textLength="39.0" lengthAdjust="spacingAndGlyphs">Draw</text>
<text x="380" y="86" font-size="16.9" fill="#242424" textLength="51.0" lengthAdjust="spacingAndGlyphs">Design</text>
<text x="456" y="86" font-size="16.9" fill="#242424" textLength="81.0" lengthAdjust="spacingAndGlyphs">Transitions</text>
<text x="561" y="86" font-size="16.9" fill="#242424" textLength="86.0" lengthAdjust="spacingAndGlyphs">Animations</text>
<text x="672" y="86" font-size="16.9" fill="#242424" textLength="82.0" lengthAdjust="spacingAndGlyphs">Slide Show</text>
<text x="779" y="86" font-size="16.9" fill="#242424" textLength="52.0" lengthAdjust="spacingAndGlyphs">Record</text>
<text x="858" y="86" font-size="16.9" fill="#242424" textLength="52.0" lengthAdjust="spacingAndGlyphs">Review</text>
<text x="936" y="86" font-size="16.9" fill="#242424" textLength="36.0" lengthAdjust="spacingAndGlyphs">View</text>
<text x="997" y="86" font-size="16.9" fill="#242424" textLength="77.0" lengthAdjust="spacingAndGlyphs">Developer</text>
<text x="1099" y="86" font-size="16.9" fill="#242424" textLength="35.0" lengthAdjust="spacingAndGlyphs">Help</text>
<text x="1213" y="86" font-size="16.9" fill="#242424" textLength="60.0" lengthAdjust="spacingAndGlyphs">Acrobat</text>
<text x="1158" y="86" font-size="16.9" font-weight="bold" fill="#242424" textLength="31.0" lengthAdjust="spacingAndGlyphs">Geo</text>
<text x="1703.8" y="85" font-size="16.5" fill="#242424" textLength="51.5" lengthAdjust="spacingAndGlyphs">Record</text>
<text x="1840.4" y="85" font-size="16.5" fill="#ffffff" textLength="42.6" lengthAdjust="spacingAndGlyphs">Share</text>
<text x="32.5" y="164" font-size="13.9" fill="#242424" textLength="40.1" lengthAdjust="spacingAndGlyphs">Single</text>
<text x="28.3" y="183.75" font-size="13.9" fill="#242424" textLength="48.5" lengthAdjust="spacingAndGlyphs">country</text>
<text x="85.6" y="164" font-size="13.9" fill="#242424" textLength="118.3" lengthAdjust="spacingAndGlyphs">Multiple countries</text>
<text x="113.75" y="183.75" font-size="13.9" fill="#242424" textLength="62.0" lengthAdjust="spacingAndGlyphs">and cities</text>
<text x="71.6" y="213.75" font-size="11.7" fill="#242424" textLength="66.6" lengthAdjust="spacingAndGlyphs">Create map</text>
<text x="64.9" y="1090" font-size="16.9" fill="#616161" textLength="145.0" lengthAdjust="spacingAndGlyphs">Click to add notes</text>
<text x="1497.3" y="255.7" font-size="17.8" fill="#242424" textLength="216.0" lengthAdjust="spacingAndGlyphs">Select countries and cities</text>
<text x="1516" y="300.4" font-size="13.7" font-weight="bold" fill="#000080" textLength="111.0" lengthAdjust="spacingAndGlyphs">1. Select country</text>
<text x="1516" y="427" font-size="13.7" font-weight="bold" fill="#000080" textLength="128.0" lengthAdjust="spacingAndGlyphs">Selected: 1 country</text>
<text x="1516" y="610" font-size="13.7" font-weight="bold" fill="#000080" textLength="211.0" lengthAdjust="spacingAndGlyphs">2. Select cities from Switzerland</text>
<text x="1516" y="761.8" font-size="13.7" font-weight="bold" fill="#000080" textLength="113.0" lengthAdjust="spacingAndGlyphs">Selected: 3 cities</text>
<text x="1517" y="331.9" font-size="12.6" fill="#000000" textLength="120.0" lengthAdjust="spacingAndGlyphs">Switzerland - Canton</text>
<text x="1517" y="457" font-size="12.6" fill="#ffffff" textLength="120.0" lengthAdjust="spacingAndGlyphs">Switzerland - Canton</text>
<text x="1515.7" y="639" font-size="12.6" fill="#000000" textLength="203.0" lengthAdjust="spacingAndGlyphs">Type city name to access full list</text>
<text x="1517" y="791.7" font-size="12.6" fill="#000000" textLength="280.6" lengthAdjust="spacingAndGlyphs">GVA (Geneva Cointrin International Airport) (CH)</text>
<text x="1517" y="807.6" font-size="12.6" fill="#000000" textLength="146.7" lengthAdjust="spacingAndGlyphs">ZRH (Zurich Airport) (CH)</text>
<text x="1517" y="823.4" font-size="12.6" fill="#ffffff" textLength="155.0" lengthAdjust="spacingAndGlyphs">LUG (Lugano Airport) (CH)</text>
<text x="1541" y="370.8" font-size="12.6" fill="#2a2a2a" textLength="76.0" lengthAdjust="spacingAndGlyphs">Add Selected</text>
<text x="1541" y="707.2" font-size="12.6" fill="#2a2a2a" textLength="76.0" lengthAdjust="spacingAndGlyphs">Add Selected</text>
<text x="1544.5" y="555.8" font-size="12.6" fill="#2a2a2a" textLength="46.0" lengthAdjust="spacingAndGlyphs">Remove</text>
<text x="1544.5" y="935.9" font-size="12.6" fill="#2a2a2a" textLength="46.0" lengthAdjust="spacingAndGlyphs">Remove</text>
<text x="1536.25" y="995.5" font-size="12.6" fill="#2a2a2a" textLength="61.0" lengthAdjust="spacingAndGlyphs">Open map</text>
<text x="1672" y="995.5" font-size="12.6" fill="#2a2a2a" textLength="47.5" lengthAdjust="spacingAndGlyphs">Clear All</text>
<text x="1795" y="995.5" font-size="12.6" fill="#2a2a2a" textLength="56.0" lengthAdjust="spacingAndGlyphs">Save map</text>
<text x="1650.75" y="1036.25" font-size="13.7" font-weight="bold" fill="#1e1e1e" textLength="93.8" lengthAdjust="spacingAndGlyphs">Insert to Slide</text>
<text x="1602.5" y="1071.25" font-size="12.6" fill="#228b22" textLength="183.8" lengthAdjust="spacingAndGlyphs">Inserted 1 countries and 3 cities</text>
<text transform="translate(29 349) rotate(-90)" font-size="14" fill="#424242" textLength="76.4" lengthAdjust="spacingAndGlyphs">Thumbnails</text>
<text x="15.3" y="1131.6" font-size="12.4" fill="#424242" textLength="79.3" lengthAdjust="spacingAndGlyphs">Slide 17 of 18</text>
<text x="159" y="1131.6" font-size="12.4" fill="#242424" textLength="147.3" lengthAdjust="spacingAndGlyphs">English (United Kingdom)</text>
<text x="351.3" y="1131.6" font-size="12.4" font-weight="bold" fill="#242424" textLength="151.0" lengthAdjust="spacingAndGlyphs">Accessibility: Investigate</text>
<text x="1271.8" y="1131.6" font-size="12.4" fill="#242424" textLength="35.0" lengthAdjust="spacingAndGlyphs">Notes</text>
<text x="1350" y="1131.6" font-size="12.4" fill="#242424" textLength="92.0" lengthAdjust="spacingAndGlyphs">Display Settings</text>
<text x="1847" y="1131.6" font-size="12.4" fill="#424242" textLength="24.0" lengthAdjust="spacingAndGlyphs">80%</text>
</svg><!--/TEXTS-->
</body></html>
